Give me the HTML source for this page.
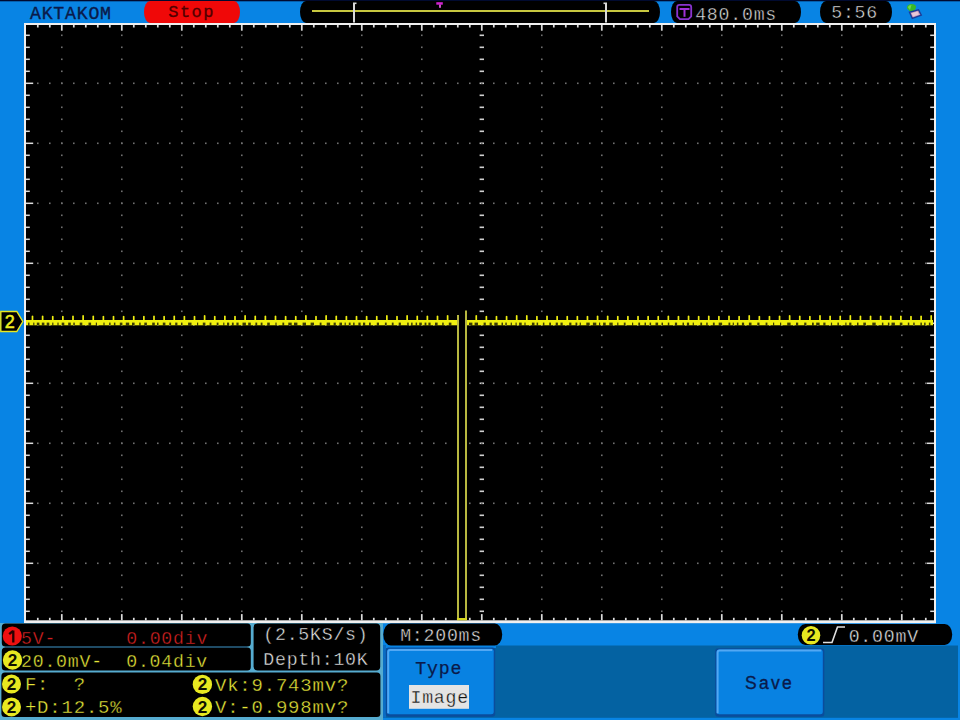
<!DOCTYPE html>
<html><head><meta charset="utf-8"><style>
html,body{margin:0;padding:0;background:#0884e4;}
body{width:960px;height:720px;overflow:hidden;}
svg{display:block;}
</style></head><body>
<svg width="960" height="720" viewBox="0 0 960 720">
<rect x="0" y="0" width="960" height="720" fill="#0884e4" />
<rect x="0" y="0" width="960" height="1.3" fill="#000a30" />
<text x="29.98" y="19.3" fill="#0a1a4a" font-family='"Liberation Mono", monospace' font-size="18.22" letter-spacing="0.768" font-weight="normal" style="white-space:pre" stroke="#0a1a4a" stroke-width="0.35" >AKTAKOM</text>
<rect x="144" y="1" width="96" height="21.9" rx="6" ry="10.9" fill="#f00808"/>
<text x="168.22" y="17.3" fill="#500000" font-family='"Liberation Mono", monospace' font-size="17.00" letter-spacing="1.496" font-weight="normal" style="white-space:pre" stroke="#500000" stroke-width="0.3" >Stop</text>
<rect x="300" y="1" width="360" height="21.9" rx="6" ry="10.9" fill="#000"/>
<rect x="312" y="10" width="337" height="2" fill="#c8c840" />
<rect x="353" y="3" width="2" height="19.5" fill="#d8d8d8" />
<rect x="353" y="2.5" width="3.5" height="1.6" fill="#d8d8d8" />
<rect x="605" y="3" width="2" height="19.5" fill="#d8d8d8" />
<rect x="603.5" y="2.5" width="3.5" height="1.6" fill="#d8d8d8" />
<rect x="436.3" y="2.2" width="6.5" height="2.5" fill="#d020d0" />
<rect x="439" y="4.5" width="2" height="3.3" fill="#c850c8" />
<rect x="671" y="1" width="130" height="21.9" rx="6" ry="10.9" fill="#000"/>
<path d="M677.2 7 Q677.2 4.8 679.4 4.8 L689 4.8 Q691.2 4.8 691.2 7 L691.2 16.5 L688.5 19.2 L679.9 19.2 L677.2 16.5 Z" fill="none" stroke="#8a34d0" stroke-width="1.8"/>
<rect x="679.5" y="8" width="10" height="2" fill="#a030d8" />
<rect x="683.5" y="9" width="2" height="7.8" fill="#a030d8" />
<text x="695.18" y="19.5" fill="#e4e4e4" font-family='"Liberation Mono", monospace' font-size="18.22" letter-spacing="0.768" font-weight="normal" style="white-space:pre" stroke="#000" stroke-width="0.45" >480.0ms</text>
<rect x="820" y="1" width="72" height="21.9" rx="6" ry="10.9" fill="#000"/>
<text x="831.23" y="18.1" fill="#e4e4e4" font-family='"Liberation Mono", monospace' font-size="18.22" letter-spacing="0.768" font-weight="normal" style="white-space:pre" stroke="#000" stroke-width="0.45" >5:56</text>
<path d="M907 8.5 Q906.5 4.5 911 4 Q916.5 3.8 916 7.5 L914.5 10.8 L910.5 12 Z" fill="#38b828"/>
<path d="M907.8 7 Q909 5 911.5 5 L910 10 Z" fill="#70d850"/>
<path d="M909.5 12.2 L918.5 9.8 L921.3 15.2 L912.3 18.3 Z" fill="#c898b8" stroke="#1a3c98" stroke-width="1.4"/>
<path d="M911.5 13.2 L917.5 11.5 L919 14.5 L913 16.5 Z" fill="#e8c8d8"/>
<rect x="24" y="23" width="912" height="600.2" fill="#f0f0f0" />
<rect x="26" y="25" width="908" height="595.3" fill="#000" />
<rect x="61.0" y="34.5" width="1.6" height="1.6" fill="#707070" />
<rect x="61.0" y="46.5" width="1.6" height="1.6" fill="#707070" />
<rect x="61.0" y="58.5" width="1.6" height="1.6" fill="#707070" />
<rect x="61.0" y="70.5" width="1.6" height="1.6" fill="#707070" />
<rect x="61.0" y="82.5" width="1.6" height="1.6" fill="#707070" />
<rect x="61.0" y="94.5" width="1.6" height="1.6" fill="#707070" />
<rect x="61.0" y="106.5" width="1.6" height="1.6" fill="#707070" />
<rect x="61.0" y="118.5" width="1.6" height="1.6" fill="#707070" />
<rect x="61.0" y="130.5" width="1.6" height="1.6" fill="#707070" />
<rect x="61.0" y="142.5" width="1.6" height="1.6" fill="#707070" />
<rect x="61.0" y="154.5" width="1.6" height="1.6" fill="#707070" />
<rect x="61.0" y="166.5" width="1.6" height="1.6" fill="#707070" />
<rect x="61.0" y="178.5" width="1.6" height="1.6" fill="#707070" />
<rect x="61.0" y="190.5" width="1.6" height="1.6" fill="#707070" />
<rect x="61.0" y="202.5" width="1.6" height="1.6" fill="#707070" />
<rect x="61.0" y="214.5" width="1.6" height="1.6" fill="#707070" />
<rect x="61.0" y="226.5" width="1.6" height="1.6" fill="#707070" />
<rect x="61.0" y="238.5" width="1.6" height="1.6" fill="#707070" />
<rect x="61.0" y="250.5" width="1.6" height="1.6" fill="#707070" />
<rect x="61.0" y="262.5" width="1.6" height="1.6" fill="#707070" />
<rect x="61.0" y="274.5" width="1.6" height="1.6" fill="#707070" />
<rect x="61.0" y="286.5" width="1.6" height="1.6" fill="#707070" />
<rect x="61.0" y="298.5" width="1.6" height="1.6" fill="#707070" />
<rect x="61.0" y="310.5" width="1.6" height="1.6" fill="#707070" />
<rect x="61.0" y="322.5" width="1.6" height="1.6" fill="#707070" />
<rect x="61.0" y="334.5" width="1.6" height="1.6" fill="#707070" />
<rect x="61.0" y="346.5" width="1.6" height="1.6" fill="#707070" />
<rect x="61.0" y="358.5" width="1.6" height="1.6" fill="#707070" />
<rect x="61.0" y="370.5" width="1.6" height="1.6" fill="#707070" />
<rect x="61.0" y="382.5" width="1.6" height="1.6" fill="#707070" />
<rect x="61.0" y="394.5" width="1.6" height="1.6" fill="#707070" />
<rect x="61.0" y="406.5" width="1.6" height="1.6" fill="#707070" />
<rect x="61.0" y="418.5" width="1.6" height="1.6" fill="#707070" />
<rect x="61.0" y="430.5" width="1.6" height="1.6" fill="#707070" />
<rect x="61.0" y="442.5" width="1.6" height="1.6" fill="#707070" />
<rect x="61.0" y="454.5" width="1.6" height="1.6" fill="#707070" />
<rect x="61.0" y="466.5" width="1.6" height="1.6" fill="#707070" />
<rect x="61.0" y="478.5" width="1.6" height="1.6" fill="#707070" />
<rect x="61.0" y="490.5" width="1.6" height="1.6" fill="#707070" />
<rect x="61.0" y="502.5" width="1.6" height="1.6" fill="#707070" />
<rect x="61.0" y="514.5" width="1.6" height="1.6" fill="#707070" />
<rect x="61.0" y="526.5" width="1.6" height="1.6" fill="#707070" />
<rect x="61.0" y="538.5" width="1.6" height="1.6" fill="#707070" />
<rect x="61.0" y="550.5" width="1.6" height="1.6" fill="#707070" />
<rect x="61.0" y="562.5" width="1.6" height="1.6" fill="#707070" />
<rect x="61.0" y="574.5" width="1.6" height="1.6" fill="#707070" />
<rect x="61.0" y="586.5" width="1.6" height="1.6" fill="#707070" />
<rect x="61.0" y="598.5" width="1.6" height="1.6" fill="#707070" />
<rect x="61.0" y="610.5" width="1.6" height="1.6" fill="#707070" />
<rect x="121.0" y="34.5" width="1.6" height="1.6" fill="#707070" />
<rect x="121.0" y="46.5" width="1.6" height="1.6" fill="#707070" />
<rect x="121.0" y="58.5" width="1.6" height="1.6" fill="#707070" />
<rect x="121.0" y="70.5" width="1.6" height="1.6" fill="#707070" />
<rect x="121.0" y="82.5" width="1.6" height="1.6" fill="#707070" />
<rect x="121.0" y="94.5" width="1.6" height="1.6" fill="#707070" />
<rect x="121.0" y="106.5" width="1.6" height="1.6" fill="#707070" />
<rect x="121.0" y="118.5" width="1.6" height="1.6" fill="#707070" />
<rect x="121.0" y="130.5" width="1.6" height="1.6" fill="#707070" />
<rect x="121.0" y="142.5" width="1.6" height="1.6" fill="#707070" />
<rect x="121.0" y="154.5" width="1.6" height="1.6" fill="#707070" />
<rect x="121.0" y="166.5" width="1.6" height="1.6" fill="#707070" />
<rect x="121.0" y="178.5" width="1.6" height="1.6" fill="#707070" />
<rect x="121.0" y="190.5" width="1.6" height="1.6" fill="#707070" />
<rect x="121.0" y="202.5" width="1.6" height="1.6" fill="#707070" />
<rect x="121.0" y="214.5" width="1.6" height="1.6" fill="#707070" />
<rect x="121.0" y="226.5" width="1.6" height="1.6" fill="#707070" />
<rect x="121.0" y="238.5" width="1.6" height="1.6" fill="#707070" />
<rect x="121.0" y="250.5" width="1.6" height="1.6" fill="#707070" />
<rect x="121.0" y="262.5" width="1.6" height="1.6" fill="#707070" />
<rect x="121.0" y="274.5" width="1.6" height="1.6" fill="#707070" />
<rect x="121.0" y="286.5" width="1.6" height="1.6" fill="#707070" />
<rect x="121.0" y="298.5" width="1.6" height="1.6" fill="#707070" />
<rect x="121.0" y="310.5" width="1.6" height="1.6" fill="#707070" />
<rect x="121.0" y="322.5" width="1.6" height="1.6" fill="#707070" />
<rect x="121.0" y="334.5" width="1.6" height="1.6" fill="#707070" />
<rect x="121.0" y="346.5" width="1.6" height="1.6" fill="#707070" />
<rect x="121.0" y="358.5" width="1.6" height="1.6" fill="#707070" />
<rect x="121.0" y="370.5" width="1.6" height="1.6" fill="#707070" />
<rect x="121.0" y="382.5" width="1.6" height="1.6" fill="#707070" />
<rect x="121.0" y="394.5" width="1.6" height="1.6" fill="#707070" />
<rect x="121.0" y="406.5" width="1.6" height="1.6" fill="#707070" />
<rect x="121.0" y="418.5" width="1.6" height="1.6" fill="#707070" />
<rect x="121.0" y="430.5" width="1.6" height="1.6" fill="#707070" />
<rect x="121.0" y="442.5" width="1.6" height="1.6" fill="#707070" />
<rect x="121.0" y="454.5" width="1.6" height="1.6" fill="#707070" />
<rect x="121.0" y="466.5" width="1.6" height="1.6" fill="#707070" />
<rect x="121.0" y="478.5" width="1.6" height="1.6" fill="#707070" />
<rect x="121.0" y="490.5" width="1.6" height="1.6" fill="#707070" />
<rect x="121.0" y="502.5" width="1.6" height="1.6" fill="#707070" />
<rect x="121.0" y="514.5" width="1.6" height="1.6" fill="#707070" />
<rect x="121.0" y="526.5" width="1.6" height="1.6" fill="#707070" />
<rect x="121.0" y="538.5" width="1.6" height="1.6" fill="#707070" />
<rect x="121.0" y="550.5" width="1.6" height="1.6" fill="#707070" />
<rect x="121.0" y="562.5" width="1.6" height="1.6" fill="#707070" />
<rect x="121.0" y="574.5" width="1.6" height="1.6" fill="#707070" />
<rect x="121.0" y="586.5" width="1.6" height="1.6" fill="#707070" />
<rect x="121.0" y="598.5" width="1.6" height="1.6" fill="#707070" />
<rect x="121.0" y="610.5" width="1.6" height="1.6" fill="#707070" />
<rect x="181.0" y="34.5" width="1.6" height="1.6" fill="#707070" />
<rect x="181.0" y="46.5" width="1.6" height="1.6" fill="#707070" />
<rect x="181.0" y="58.5" width="1.6" height="1.6" fill="#707070" />
<rect x="181.0" y="70.5" width="1.6" height="1.6" fill="#707070" />
<rect x="181.0" y="82.5" width="1.6" height="1.6" fill="#707070" />
<rect x="181.0" y="94.5" width="1.6" height="1.6" fill="#707070" />
<rect x="181.0" y="106.5" width="1.6" height="1.6" fill="#707070" />
<rect x="181.0" y="118.5" width="1.6" height="1.6" fill="#707070" />
<rect x="181.0" y="130.5" width="1.6" height="1.6" fill="#707070" />
<rect x="181.0" y="142.5" width="1.6" height="1.6" fill="#707070" />
<rect x="181.0" y="154.5" width="1.6" height="1.6" fill="#707070" />
<rect x="181.0" y="166.5" width="1.6" height="1.6" fill="#707070" />
<rect x="181.0" y="178.5" width="1.6" height="1.6" fill="#707070" />
<rect x="181.0" y="190.5" width="1.6" height="1.6" fill="#707070" />
<rect x="181.0" y="202.5" width="1.6" height="1.6" fill="#707070" />
<rect x="181.0" y="214.5" width="1.6" height="1.6" fill="#707070" />
<rect x="181.0" y="226.5" width="1.6" height="1.6" fill="#707070" />
<rect x="181.0" y="238.5" width="1.6" height="1.6" fill="#707070" />
<rect x="181.0" y="250.5" width="1.6" height="1.6" fill="#707070" />
<rect x="181.0" y="262.5" width="1.6" height="1.6" fill="#707070" />
<rect x="181.0" y="274.5" width="1.6" height="1.6" fill="#707070" />
<rect x="181.0" y="286.5" width="1.6" height="1.6" fill="#707070" />
<rect x="181.0" y="298.5" width="1.6" height="1.6" fill="#707070" />
<rect x="181.0" y="310.5" width="1.6" height="1.6" fill="#707070" />
<rect x="181.0" y="322.5" width="1.6" height="1.6" fill="#707070" />
<rect x="181.0" y="334.5" width="1.6" height="1.6" fill="#707070" />
<rect x="181.0" y="346.5" width="1.6" height="1.6" fill="#707070" />
<rect x="181.0" y="358.5" width="1.6" height="1.6" fill="#707070" />
<rect x="181.0" y="370.5" width="1.6" height="1.6" fill="#707070" />
<rect x="181.0" y="382.5" width="1.6" height="1.6" fill="#707070" />
<rect x="181.0" y="394.5" width="1.6" height="1.6" fill="#707070" />
<rect x="181.0" y="406.5" width="1.6" height="1.6" fill="#707070" />
<rect x="181.0" y="418.5" width="1.6" height="1.6" fill="#707070" />
<rect x="181.0" y="430.5" width="1.6" height="1.6" fill="#707070" />
<rect x="181.0" y="442.5" width="1.6" height="1.6" fill="#707070" />
<rect x="181.0" y="454.5" width="1.6" height="1.6" fill="#707070" />
<rect x="181.0" y="466.5" width="1.6" height="1.6" fill="#707070" />
<rect x="181.0" y="478.5" width="1.6" height="1.6" fill="#707070" />
<rect x="181.0" y="490.5" width="1.6" height="1.6" fill="#707070" />
<rect x="181.0" y="502.5" width="1.6" height="1.6" fill="#707070" />
<rect x="181.0" y="514.5" width="1.6" height="1.6" fill="#707070" />
<rect x="181.0" y="526.5" width="1.6" height="1.6" fill="#707070" />
<rect x="181.0" y="538.5" width="1.6" height="1.6" fill="#707070" />
<rect x="181.0" y="550.5" width="1.6" height="1.6" fill="#707070" />
<rect x="181.0" y="562.5" width="1.6" height="1.6" fill="#707070" />
<rect x="181.0" y="574.5" width="1.6" height="1.6" fill="#707070" />
<rect x="181.0" y="586.5" width="1.6" height="1.6" fill="#707070" />
<rect x="181.0" y="598.5" width="1.6" height="1.6" fill="#707070" />
<rect x="181.0" y="610.5" width="1.6" height="1.6" fill="#707070" />
<rect x="241.0" y="34.5" width="1.6" height="1.6" fill="#707070" />
<rect x="241.0" y="46.5" width="1.6" height="1.6" fill="#707070" />
<rect x="241.0" y="58.5" width="1.6" height="1.6" fill="#707070" />
<rect x="241.0" y="70.5" width="1.6" height="1.6" fill="#707070" />
<rect x="241.0" y="82.5" width="1.6" height="1.6" fill="#707070" />
<rect x="241.0" y="94.5" width="1.6" height="1.6" fill="#707070" />
<rect x="241.0" y="106.5" width="1.6" height="1.6" fill="#707070" />
<rect x="241.0" y="118.5" width="1.6" height="1.6" fill="#707070" />
<rect x="241.0" y="130.5" width="1.6" height="1.6" fill="#707070" />
<rect x="241.0" y="142.5" width="1.6" height="1.6" fill="#707070" />
<rect x="241.0" y="154.5" width="1.6" height="1.6" fill="#707070" />
<rect x="241.0" y="166.5" width="1.6" height="1.6" fill="#707070" />
<rect x="241.0" y="178.5" width="1.6" height="1.6" fill="#707070" />
<rect x="241.0" y="190.5" width="1.6" height="1.6" fill="#707070" />
<rect x="241.0" y="202.5" width="1.6" height="1.6" fill="#707070" />
<rect x="241.0" y="214.5" width="1.6" height="1.6" fill="#707070" />
<rect x="241.0" y="226.5" width="1.6" height="1.6" fill="#707070" />
<rect x="241.0" y="238.5" width="1.6" height="1.6" fill="#707070" />
<rect x="241.0" y="250.5" width="1.6" height="1.6" fill="#707070" />
<rect x="241.0" y="262.5" width="1.6" height="1.6" fill="#707070" />
<rect x="241.0" y="274.5" width="1.6" height="1.6" fill="#707070" />
<rect x="241.0" y="286.5" width="1.6" height="1.6" fill="#707070" />
<rect x="241.0" y="298.5" width="1.6" height="1.6" fill="#707070" />
<rect x="241.0" y="310.5" width="1.6" height="1.6" fill="#707070" />
<rect x="241.0" y="322.5" width="1.6" height="1.6" fill="#707070" />
<rect x="241.0" y="334.5" width="1.6" height="1.6" fill="#707070" />
<rect x="241.0" y="346.5" width="1.6" height="1.6" fill="#707070" />
<rect x="241.0" y="358.5" width="1.6" height="1.6" fill="#707070" />
<rect x="241.0" y="370.5" width="1.6" height="1.6" fill="#707070" />
<rect x="241.0" y="382.5" width="1.6" height="1.6" fill="#707070" />
<rect x="241.0" y="394.5" width="1.6" height="1.6" fill="#707070" />
<rect x="241.0" y="406.5" width="1.6" height="1.6" fill="#707070" />
<rect x="241.0" y="418.5" width="1.6" height="1.6" fill="#707070" />
<rect x="241.0" y="430.5" width="1.6" height="1.6" fill="#707070" />
<rect x="241.0" y="442.5" width="1.6" height="1.6" fill="#707070" />
<rect x="241.0" y="454.5" width="1.6" height="1.6" fill="#707070" />
<rect x="241.0" y="466.5" width="1.6" height="1.6" fill="#707070" />
<rect x="241.0" y="478.5" width="1.6" height="1.6" fill="#707070" />
<rect x="241.0" y="490.5" width="1.6" height="1.6" fill="#707070" />
<rect x="241.0" y="502.5" width="1.6" height="1.6" fill="#707070" />
<rect x="241.0" y="514.5" width="1.6" height="1.6" fill="#707070" />
<rect x="241.0" y="526.5" width="1.6" height="1.6" fill="#707070" />
<rect x="241.0" y="538.5" width="1.6" height="1.6" fill="#707070" />
<rect x="241.0" y="550.5" width="1.6" height="1.6" fill="#707070" />
<rect x="241.0" y="562.5" width="1.6" height="1.6" fill="#707070" />
<rect x="241.0" y="574.5" width="1.6" height="1.6" fill="#707070" />
<rect x="241.0" y="586.5" width="1.6" height="1.6" fill="#707070" />
<rect x="241.0" y="598.5" width="1.6" height="1.6" fill="#707070" />
<rect x="241.0" y="610.5" width="1.6" height="1.6" fill="#707070" />
<rect x="301.0" y="34.5" width="1.6" height="1.6" fill="#707070" />
<rect x="301.0" y="46.5" width="1.6" height="1.6" fill="#707070" />
<rect x="301.0" y="58.5" width="1.6" height="1.6" fill="#707070" />
<rect x="301.0" y="70.5" width="1.6" height="1.6" fill="#707070" />
<rect x="301.0" y="82.5" width="1.6" height="1.6" fill="#707070" />
<rect x="301.0" y="94.5" width="1.6" height="1.6" fill="#707070" />
<rect x="301.0" y="106.5" width="1.6" height="1.6" fill="#707070" />
<rect x="301.0" y="118.5" width="1.6" height="1.6" fill="#707070" />
<rect x="301.0" y="130.5" width="1.6" height="1.6" fill="#707070" />
<rect x="301.0" y="142.5" width="1.6" height="1.6" fill="#707070" />
<rect x="301.0" y="154.5" width="1.6" height="1.6" fill="#707070" />
<rect x="301.0" y="166.5" width="1.6" height="1.6" fill="#707070" />
<rect x="301.0" y="178.5" width="1.6" height="1.6" fill="#707070" />
<rect x="301.0" y="190.5" width="1.6" height="1.6" fill="#707070" />
<rect x="301.0" y="202.5" width="1.6" height="1.6" fill="#707070" />
<rect x="301.0" y="214.5" width="1.6" height="1.6" fill="#707070" />
<rect x="301.0" y="226.5" width="1.6" height="1.6" fill="#707070" />
<rect x="301.0" y="238.5" width="1.6" height="1.6" fill="#707070" />
<rect x="301.0" y="250.5" width="1.6" height="1.6" fill="#707070" />
<rect x="301.0" y="262.5" width="1.6" height="1.6" fill="#707070" />
<rect x="301.0" y="274.5" width="1.6" height="1.6" fill="#707070" />
<rect x="301.0" y="286.5" width="1.6" height="1.6" fill="#707070" />
<rect x="301.0" y="298.5" width="1.6" height="1.6" fill="#707070" />
<rect x="301.0" y="310.5" width="1.6" height="1.6" fill="#707070" />
<rect x="301.0" y="322.5" width="1.6" height="1.6" fill="#707070" />
<rect x="301.0" y="334.5" width="1.6" height="1.6" fill="#707070" />
<rect x="301.0" y="346.5" width="1.6" height="1.6" fill="#707070" />
<rect x="301.0" y="358.5" width="1.6" height="1.6" fill="#707070" />
<rect x="301.0" y="370.5" width="1.6" height="1.6" fill="#707070" />
<rect x="301.0" y="382.5" width="1.6" height="1.6" fill="#707070" />
<rect x="301.0" y="394.5" width="1.6" height="1.6" fill="#707070" />
<rect x="301.0" y="406.5" width="1.6" height="1.6" fill="#707070" />
<rect x="301.0" y="418.5" width="1.6" height="1.6" fill="#707070" />
<rect x="301.0" y="430.5" width="1.6" height="1.6" fill="#707070" />
<rect x="301.0" y="442.5" width="1.6" height="1.6" fill="#707070" />
<rect x="301.0" y="454.5" width="1.6" height="1.6" fill="#707070" />
<rect x="301.0" y="466.5" width="1.6" height="1.6" fill="#707070" />
<rect x="301.0" y="478.5" width="1.6" height="1.6" fill="#707070" />
<rect x="301.0" y="490.5" width="1.6" height="1.6" fill="#707070" />
<rect x="301.0" y="502.5" width="1.6" height="1.6" fill="#707070" />
<rect x="301.0" y="514.5" width="1.6" height="1.6" fill="#707070" />
<rect x="301.0" y="526.5" width="1.6" height="1.6" fill="#707070" />
<rect x="301.0" y="538.5" width="1.6" height="1.6" fill="#707070" />
<rect x="301.0" y="550.5" width="1.6" height="1.6" fill="#707070" />
<rect x="301.0" y="562.5" width="1.6" height="1.6" fill="#707070" />
<rect x="301.0" y="574.5" width="1.6" height="1.6" fill="#707070" />
<rect x="301.0" y="586.5" width="1.6" height="1.6" fill="#707070" />
<rect x="301.0" y="598.5" width="1.6" height="1.6" fill="#707070" />
<rect x="301.0" y="610.5" width="1.6" height="1.6" fill="#707070" />
<rect x="361.0" y="34.5" width="1.6" height="1.6" fill="#707070" />
<rect x="361.0" y="46.5" width="1.6" height="1.6" fill="#707070" />
<rect x="361.0" y="58.5" width="1.6" height="1.6" fill="#707070" />
<rect x="361.0" y="70.5" width="1.6" height="1.6" fill="#707070" />
<rect x="361.0" y="82.5" width="1.6" height="1.6" fill="#707070" />
<rect x="361.0" y="94.5" width="1.6" height="1.6" fill="#707070" />
<rect x="361.0" y="106.5" width="1.6" height="1.6" fill="#707070" />
<rect x="361.0" y="118.5" width="1.6" height="1.6" fill="#707070" />
<rect x="361.0" y="130.5" width="1.6" height="1.6" fill="#707070" />
<rect x="361.0" y="142.5" width="1.6" height="1.6" fill="#707070" />
<rect x="361.0" y="154.5" width="1.6" height="1.6" fill="#707070" />
<rect x="361.0" y="166.5" width="1.6" height="1.6" fill="#707070" />
<rect x="361.0" y="178.5" width="1.6" height="1.6" fill="#707070" />
<rect x="361.0" y="190.5" width="1.6" height="1.6" fill="#707070" />
<rect x="361.0" y="202.5" width="1.6" height="1.6" fill="#707070" />
<rect x="361.0" y="214.5" width="1.6" height="1.6" fill="#707070" />
<rect x="361.0" y="226.5" width="1.6" height="1.6" fill="#707070" />
<rect x="361.0" y="238.5" width="1.6" height="1.6" fill="#707070" />
<rect x="361.0" y="250.5" width="1.6" height="1.6" fill="#707070" />
<rect x="361.0" y="262.5" width="1.6" height="1.6" fill="#707070" />
<rect x="361.0" y="274.5" width="1.6" height="1.6" fill="#707070" />
<rect x="361.0" y="286.5" width="1.6" height="1.6" fill="#707070" />
<rect x="361.0" y="298.5" width="1.6" height="1.6" fill="#707070" />
<rect x="361.0" y="310.5" width="1.6" height="1.6" fill="#707070" />
<rect x="361.0" y="322.5" width="1.6" height="1.6" fill="#707070" />
<rect x="361.0" y="334.5" width="1.6" height="1.6" fill="#707070" />
<rect x="361.0" y="346.5" width="1.6" height="1.6" fill="#707070" />
<rect x="361.0" y="358.5" width="1.6" height="1.6" fill="#707070" />
<rect x="361.0" y="370.5" width="1.6" height="1.6" fill="#707070" />
<rect x="361.0" y="382.5" width="1.6" height="1.6" fill="#707070" />
<rect x="361.0" y="394.5" width="1.6" height="1.6" fill="#707070" />
<rect x="361.0" y="406.5" width="1.6" height="1.6" fill="#707070" />
<rect x="361.0" y="418.5" width="1.6" height="1.6" fill="#707070" />
<rect x="361.0" y="430.5" width="1.6" height="1.6" fill="#707070" />
<rect x="361.0" y="442.5" width="1.6" height="1.6" fill="#707070" />
<rect x="361.0" y="454.5" width="1.6" height="1.6" fill="#707070" />
<rect x="361.0" y="466.5" width="1.6" height="1.6" fill="#707070" />
<rect x="361.0" y="478.5" width="1.6" height="1.6" fill="#707070" />
<rect x="361.0" y="490.5" width="1.6" height="1.6" fill="#707070" />
<rect x="361.0" y="502.5" width="1.6" height="1.6" fill="#707070" />
<rect x="361.0" y="514.5" width="1.6" height="1.6" fill="#707070" />
<rect x="361.0" y="526.5" width="1.6" height="1.6" fill="#707070" />
<rect x="361.0" y="538.5" width="1.6" height="1.6" fill="#707070" />
<rect x="361.0" y="550.5" width="1.6" height="1.6" fill="#707070" />
<rect x="361.0" y="562.5" width="1.6" height="1.6" fill="#707070" />
<rect x="361.0" y="574.5" width="1.6" height="1.6" fill="#707070" />
<rect x="361.0" y="586.5" width="1.6" height="1.6" fill="#707070" />
<rect x="361.0" y="598.5" width="1.6" height="1.6" fill="#707070" />
<rect x="361.0" y="610.5" width="1.6" height="1.6" fill="#707070" />
<rect x="421.0" y="34.5" width="1.6" height="1.6" fill="#707070" />
<rect x="421.0" y="46.5" width="1.6" height="1.6" fill="#707070" />
<rect x="421.0" y="58.5" width="1.6" height="1.6" fill="#707070" />
<rect x="421.0" y="70.5" width="1.6" height="1.6" fill="#707070" />
<rect x="421.0" y="82.5" width="1.6" height="1.6" fill="#707070" />
<rect x="421.0" y="94.5" width="1.6" height="1.6" fill="#707070" />
<rect x="421.0" y="106.5" width="1.6" height="1.6" fill="#707070" />
<rect x="421.0" y="118.5" width="1.6" height="1.6" fill="#707070" />
<rect x="421.0" y="130.5" width="1.6" height="1.6" fill="#707070" />
<rect x="421.0" y="142.5" width="1.6" height="1.6" fill="#707070" />
<rect x="421.0" y="154.5" width="1.6" height="1.6" fill="#707070" />
<rect x="421.0" y="166.5" width="1.6" height="1.6" fill="#707070" />
<rect x="421.0" y="178.5" width="1.6" height="1.6" fill="#707070" />
<rect x="421.0" y="190.5" width="1.6" height="1.6" fill="#707070" />
<rect x="421.0" y="202.5" width="1.6" height="1.6" fill="#707070" />
<rect x="421.0" y="214.5" width="1.6" height="1.6" fill="#707070" />
<rect x="421.0" y="226.5" width="1.6" height="1.6" fill="#707070" />
<rect x="421.0" y="238.5" width="1.6" height="1.6" fill="#707070" />
<rect x="421.0" y="250.5" width="1.6" height="1.6" fill="#707070" />
<rect x="421.0" y="262.5" width="1.6" height="1.6" fill="#707070" />
<rect x="421.0" y="274.5" width="1.6" height="1.6" fill="#707070" />
<rect x="421.0" y="286.5" width="1.6" height="1.6" fill="#707070" />
<rect x="421.0" y="298.5" width="1.6" height="1.6" fill="#707070" />
<rect x="421.0" y="310.5" width="1.6" height="1.6" fill="#707070" />
<rect x="421.0" y="322.5" width="1.6" height="1.6" fill="#707070" />
<rect x="421.0" y="334.5" width="1.6" height="1.6" fill="#707070" />
<rect x="421.0" y="346.5" width="1.6" height="1.6" fill="#707070" />
<rect x="421.0" y="358.5" width="1.6" height="1.6" fill="#707070" />
<rect x="421.0" y="370.5" width="1.6" height="1.6" fill="#707070" />
<rect x="421.0" y="382.5" width="1.6" height="1.6" fill="#707070" />
<rect x="421.0" y="394.5" width="1.6" height="1.6" fill="#707070" />
<rect x="421.0" y="406.5" width="1.6" height="1.6" fill="#707070" />
<rect x="421.0" y="418.5" width="1.6" height="1.6" fill="#707070" />
<rect x="421.0" y="430.5" width="1.6" height="1.6" fill="#707070" />
<rect x="421.0" y="442.5" width="1.6" height="1.6" fill="#707070" />
<rect x="421.0" y="454.5" width="1.6" height="1.6" fill="#707070" />
<rect x="421.0" y="466.5" width="1.6" height="1.6" fill="#707070" />
<rect x="421.0" y="478.5" width="1.6" height="1.6" fill="#707070" />
<rect x="421.0" y="490.5" width="1.6" height="1.6" fill="#707070" />
<rect x="421.0" y="502.5" width="1.6" height="1.6" fill="#707070" />
<rect x="421.0" y="514.5" width="1.6" height="1.6" fill="#707070" />
<rect x="421.0" y="526.5" width="1.6" height="1.6" fill="#707070" />
<rect x="421.0" y="538.5" width="1.6" height="1.6" fill="#707070" />
<rect x="421.0" y="550.5" width="1.6" height="1.6" fill="#707070" />
<rect x="421.0" y="562.5" width="1.6" height="1.6" fill="#707070" />
<rect x="421.0" y="574.5" width="1.6" height="1.6" fill="#707070" />
<rect x="421.0" y="586.5" width="1.6" height="1.6" fill="#707070" />
<rect x="421.0" y="598.5" width="1.6" height="1.6" fill="#707070" />
<rect x="421.0" y="610.5" width="1.6" height="1.6" fill="#707070" />
<rect x="479.6" y="34.5" width="4.4" height="1.6" fill="#d0d0d0" />
<rect x="479.6" y="46.5" width="4.4" height="1.6" fill="#d0d0d0" />
<rect x="479.6" y="58.5" width="4.4" height="1.6" fill="#d0d0d0" />
<rect x="479.6" y="70.5" width="4.4" height="1.6" fill="#d0d0d0" />
<rect x="479.6" y="82.5" width="4.4" height="1.6" fill="#d0d0d0" />
<rect x="479.6" y="94.5" width="4.4" height="1.6" fill="#d0d0d0" />
<rect x="479.6" y="106.5" width="4.4" height="1.6" fill="#d0d0d0" />
<rect x="479.6" y="118.5" width="4.4" height="1.6" fill="#d0d0d0" />
<rect x="479.6" y="130.5" width="4.4" height="1.6" fill="#d0d0d0" />
<rect x="479.6" y="142.5" width="4.4" height="1.6" fill="#d0d0d0" />
<rect x="479.6" y="154.5" width="4.4" height="1.6" fill="#d0d0d0" />
<rect x="479.6" y="166.5" width="4.4" height="1.6" fill="#d0d0d0" />
<rect x="479.6" y="178.5" width="4.4" height="1.6" fill="#d0d0d0" />
<rect x="479.6" y="190.5" width="4.4" height="1.6" fill="#d0d0d0" />
<rect x="479.6" y="202.5" width="4.4" height="1.6" fill="#d0d0d0" />
<rect x="479.6" y="214.5" width="4.4" height="1.6" fill="#d0d0d0" />
<rect x="479.6" y="226.5" width="4.4" height="1.6" fill="#d0d0d0" />
<rect x="479.6" y="238.5" width="4.4" height="1.6" fill="#d0d0d0" />
<rect x="479.6" y="250.5" width="4.4" height="1.6" fill="#d0d0d0" />
<rect x="479.6" y="262.5" width="4.4" height="1.6" fill="#d0d0d0" />
<rect x="479.6" y="274.5" width="4.4" height="1.6" fill="#d0d0d0" />
<rect x="479.6" y="286.5" width="4.4" height="1.6" fill="#d0d0d0" />
<rect x="479.6" y="298.5" width="4.4" height="1.6" fill="#d0d0d0" />
<rect x="479.6" y="310.5" width="4.4" height="1.6" fill="#d0d0d0" />
<rect x="479.6" y="322.5" width="4.4" height="1.6" fill="#d0d0d0" />
<rect x="479.6" y="334.5" width="4.4" height="1.6" fill="#d0d0d0" />
<rect x="479.6" y="346.5" width="4.4" height="1.6" fill="#d0d0d0" />
<rect x="479.6" y="358.5" width="4.4" height="1.6" fill="#d0d0d0" />
<rect x="479.6" y="370.5" width="4.4" height="1.6" fill="#d0d0d0" />
<rect x="479.6" y="382.5" width="4.4" height="1.6" fill="#d0d0d0" />
<rect x="479.6" y="394.5" width="4.4" height="1.6" fill="#d0d0d0" />
<rect x="479.6" y="406.5" width="4.4" height="1.6" fill="#d0d0d0" />
<rect x="479.6" y="418.5" width="4.4" height="1.6" fill="#d0d0d0" />
<rect x="479.6" y="430.5" width="4.4" height="1.6" fill="#d0d0d0" />
<rect x="479.6" y="442.5" width="4.4" height="1.6" fill="#d0d0d0" />
<rect x="479.6" y="454.5" width="4.4" height="1.6" fill="#d0d0d0" />
<rect x="479.6" y="466.5" width="4.4" height="1.6" fill="#d0d0d0" />
<rect x="479.6" y="478.5" width="4.4" height="1.6" fill="#d0d0d0" />
<rect x="479.6" y="490.5" width="4.4" height="1.6" fill="#d0d0d0" />
<rect x="479.6" y="502.5" width="4.4" height="1.6" fill="#d0d0d0" />
<rect x="479.6" y="514.5" width="4.4" height="1.6" fill="#d0d0d0" />
<rect x="479.6" y="526.5" width="4.4" height="1.6" fill="#d0d0d0" />
<rect x="479.6" y="538.5" width="4.4" height="1.6" fill="#d0d0d0" />
<rect x="479.6" y="550.5" width="4.4" height="1.6" fill="#d0d0d0" />
<rect x="479.6" y="562.5" width="4.4" height="1.6" fill="#d0d0d0" />
<rect x="479.6" y="574.5" width="4.4" height="1.6" fill="#d0d0d0" />
<rect x="479.6" y="586.5" width="4.4" height="1.6" fill="#d0d0d0" />
<rect x="479.6" y="598.5" width="4.4" height="1.6" fill="#d0d0d0" />
<rect x="479.6" y="610.5" width="4.4" height="1.6" fill="#d0d0d0" />
<rect x="541.0" y="34.5" width="1.6" height="1.6" fill="#707070" />
<rect x="541.0" y="46.5" width="1.6" height="1.6" fill="#707070" />
<rect x="541.0" y="58.5" width="1.6" height="1.6" fill="#707070" />
<rect x="541.0" y="70.5" width="1.6" height="1.6" fill="#707070" />
<rect x="541.0" y="82.5" width="1.6" height="1.6" fill="#707070" />
<rect x="541.0" y="94.5" width="1.6" height="1.6" fill="#707070" />
<rect x="541.0" y="106.5" width="1.6" height="1.6" fill="#707070" />
<rect x="541.0" y="118.5" width="1.6" height="1.6" fill="#707070" />
<rect x="541.0" y="130.5" width="1.6" height="1.6" fill="#707070" />
<rect x="541.0" y="142.5" width="1.6" height="1.6" fill="#707070" />
<rect x="541.0" y="154.5" width="1.6" height="1.6" fill="#707070" />
<rect x="541.0" y="166.5" width="1.6" height="1.6" fill="#707070" />
<rect x="541.0" y="178.5" width="1.6" height="1.6" fill="#707070" />
<rect x="541.0" y="190.5" width="1.6" height="1.6" fill="#707070" />
<rect x="541.0" y="202.5" width="1.6" height="1.6" fill="#707070" />
<rect x="541.0" y="214.5" width="1.6" height="1.6" fill="#707070" />
<rect x="541.0" y="226.5" width="1.6" height="1.6" fill="#707070" />
<rect x="541.0" y="238.5" width="1.6" height="1.6" fill="#707070" />
<rect x="541.0" y="250.5" width="1.6" height="1.6" fill="#707070" />
<rect x="541.0" y="262.5" width="1.6" height="1.6" fill="#707070" />
<rect x="541.0" y="274.5" width="1.6" height="1.6" fill="#707070" />
<rect x="541.0" y="286.5" width="1.6" height="1.6" fill="#707070" />
<rect x="541.0" y="298.5" width="1.6" height="1.6" fill="#707070" />
<rect x="541.0" y="310.5" width="1.6" height="1.6" fill="#707070" />
<rect x="541.0" y="322.5" width="1.6" height="1.6" fill="#707070" />
<rect x="541.0" y="334.5" width="1.6" height="1.6" fill="#707070" />
<rect x="541.0" y="346.5" width="1.6" height="1.6" fill="#707070" />
<rect x="541.0" y="358.5" width="1.6" height="1.6" fill="#707070" />
<rect x="541.0" y="370.5" width="1.6" height="1.6" fill="#707070" />
<rect x="541.0" y="382.5" width="1.6" height="1.6" fill="#707070" />
<rect x="541.0" y="394.5" width="1.6" height="1.6" fill="#707070" />
<rect x="541.0" y="406.5" width="1.6" height="1.6" fill="#707070" />
<rect x="541.0" y="418.5" width="1.6" height="1.6" fill="#707070" />
<rect x="541.0" y="430.5" width="1.6" height="1.6" fill="#707070" />
<rect x="541.0" y="442.5" width="1.6" height="1.6" fill="#707070" />
<rect x="541.0" y="454.5" width="1.6" height="1.6" fill="#707070" />
<rect x="541.0" y="466.5" width="1.6" height="1.6" fill="#707070" />
<rect x="541.0" y="478.5" width="1.6" height="1.6" fill="#707070" />
<rect x="541.0" y="490.5" width="1.6" height="1.6" fill="#707070" />
<rect x="541.0" y="502.5" width="1.6" height="1.6" fill="#707070" />
<rect x="541.0" y="514.5" width="1.6" height="1.6" fill="#707070" />
<rect x="541.0" y="526.5" width="1.6" height="1.6" fill="#707070" />
<rect x="541.0" y="538.5" width="1.6" height="1.6" fill="#707070" />
<rect x="541.0" y="550.5" width="1.6" height="1.6" fill="#707070" />
<rect x="541.0" y="562.5" width="1.6" height="1.6" fill="#707070" />
<rect x="541.0" y="574.5" width="1.6" height="1.6" fill="#707070" />
<rect x="541.0" y="586.5" width="1.6" height="1.6" fill="#707070" />
<rect x="541.0" y="598.5" width="1.6" height="1.6" fill="#707070" />
<rect x="541.0" y="610.5" width="1.6" height="1.6" fill="#707070" />
<rect x="601.0" y="34.5" width="1.6" height="1.6" fill="#707070" />
<rect x="601.0" y="46.5" width="1.6" height="1.6" fill="#707070" />
<rect x="601.0" y="58.5" width="1.6" height="1.6" fill="#707070" />
<rect x="601.0" y="70.5" width="1.6" height="1.6" fill="#707070" />
<rect x="601.0" y="82.5" width="1.6" height="1.6" fill="#707070" />
<rect x="601.0" y="94.5" width="1.6" height="1.6" fill="#707070" />
<rect x="601.0" y="106.5" width="1.6" height="1.6" fill="#707070" />
<rect x="601.0" y="118.5" width="1.6" height="1.6" fill="#707070" />
<rect x="601.0" y="130.5" width="1.6" height="1.6" fill="#707070" />
<rect x="601.0" y="142.5" width="1.6" height="1.6" fill="#707070" />
<rect x="601.0" y="154.5" width="1.6" height="1.6" fill="#707070" />
<rect x="601.0" y="166.5" width="1.6" height="1.6" fill="#707070" />
<rect x="601.0" y="178.5" width="1.6" height="1.6" fill="#707070" />
<rect x="601.0" y="190.5" width="1.6" height="1.6" fill="#707070" />
<rect x="601.0" y="202.5" width="1.6" height="1.6" fill="#707070" />
<rect x="601.0" y="214.5" width="1.6" height="1.6" fill="#707070" />
<rect x="601.0" y="226.5" width="1.6" height="1.6" fill="#707070" />
<rect x="601.0" y="238.5" width="1.6" height="1.6" fill="#707070" />
<rect x="601.0" y="250.5" width="1.6" height="1.6" fill="#707070" />
<rect x="601.0" y="262.5" width="1.6" height="1.6" fill="#707070" />
<rect x="601.0" y="274.5" width="1.6" height="1.6" fill="#707070" />
<rect x="601.0" y="286.5" width="1.6" height="1.6" fill="#707070" />
<rect x="601.0" y="298.5" width="1.6" height="1.6" fill="#707070" />
<rect x="601.0" y="310.5" width="1.6" height="1.6" fill="#707070" />
<rect x="601.0" y="322.5" width="1.6" height="1.6" fill="#707070" />
<rect x="601.0" y="334.5" width="1.6" height="1.6" fill="#707070" />
<rect x="601.0" y="346.5" width="1.6" height="1.6" fill="#707070" />
<rect x="601.0" y="358.5" width="1.6" height="1.6" fill="#707070" />
<rect x="601.0" y="370.5" width="1.6" height="1.6" fill="#707070" />
<rect x="601.0" y="382.5" width="1.6" height="1.6" fill="#707070" />
<rect x="601.0" y="394.5" width="1.6" height="1.6" fill="#707070" />
<rect x="601.0" y="406.5" width="1.6" height="1.6" fill="#707070" />
<rect x="601.0" y="418.5" width="1.6" height="1.6" fill="#707070" />
<rect x="601.0" y="430.5" width="1.6" height="1.6" fill="#707070" />
<rect x="601.0" y="442.5" width="1.6" height="1.6" fill="#707070" />
<rect x="601.0" y="454.5" width="1.6" height="1.6" fill="#707070" />
<rect x="601.0" y="466.5" width="1.6" height="1.6" fill="#707070" />
<rect x="601.0" y="478.5" width="1.6" height="1.6" fill="#707070" />
<rect x="601.0" y="490.5" width="1.6" height="1.6" fill="#707070" />
<rect x="601.0" y="502.5" width="1.6" height="1.6" fill="#707070" />
<rect x="601.0" y="514.5" width="1.6" height="1.6" fill="#707070" />
<rect x="601.0" y="526.5" width="1.6" height="1.6" fill="#707070" />
<rect x="601.0" y="538.5" width="1.6" height="1.6" fill="#707070" />
<rect x="601.0" y="550.5" width="1.6" height="1.6" fill="#707070" />
<rect x="601.0" y="562.5" width="1.6" height="1.6" fill="#707070" />
<rect x="601.0" y="574.5" width="1.6" height="1.6" fill="#707070" />
<rect x="601.0" y="586.5" width="1.6" height="1.6" fill="#707070" />
<rect x="601.0" y="598.5" width="1.6" height="1.6" fill="#707070" />
<rect x="601.0" y="610.5" width="1.6" height="1.6" fill="#707070" />
<rect x="661.0" y="34.5" width="1.6" height="1.6" fill="#707070" />
<rect x="661.0" y="46.5" width="1.6" height="1.6" fill="#707070" />
<rect x="661.0" y="58.5" width="1.6" height="1.6" fill="#707070" />
<rect x="661.0" y="70.5" width="1.6" height="1.6" fill="#707070" />
<rect x="661.0" y="82.5" width="1.6" height="1.6" fill="#707070" />
<rect x="661.0" y="94.5" width="1.6" height="1.6" fill="#707070" />
<rect x="661.0" y="106.5" width="1.6" height="1.6" fill="#707070" />
<rect x="661.0" y="118.5" width="1.6" height="1.6" fill="#707070" />
<rect x="661.0" y="130.5" width="1.6" height="1.6" fill="#707070" />
<rect x="661.0" y="142.5" width="1.6" height="1.6" fill="#707070" />
<rect x="661.0" y="154.5" width="1.6" height="1.6" fill="#707070" />
<rect x="661.0" y="166.5" width="1.6" height="1.6" fill="#707070" />
<rect x="661.0" y="178.5" width="1.6" height="1.6" fill="#707070" />
<rect x="661.0" y="190.5" width="1.6" height="1.6" fill="#707070" />
<rect x="661.0" y="202.5" width="1.6" height="1.6" fill="#707070" />
<rect x="661.0" y="214.5" width="1.6" height="1.6" fill="#707070" />
<rect x="661.0" y="226.5" width="1.6" height="1.6" fill="#707070" />
<rect x="661.0" y="238.5" width="1.6" height="1.6" fill="#707070" />
<rect x="661.0" y="250.5" width="1.6" height="1.6" fill="#707070" />
<rect x="661.0" y="262.5" width="1.6" height="1.6" fill="#707070" />
<rect x="661.0" y="274.5" width="1.6" height="1.6" fill="#707070" />
<rect x="661.0" y="286.5" width="1.6" height="1.6" fill="#707070" />
<rect x="661.0" y="298.5" width="1.6" height="1.6" fill="#707070" />
<rect x="661.0" y="310.5" width="1.6" height="1.6" fill="#707070" />
<rect x="661.0" y="322.5" width="1.6" height="1.6" fill="#707070" />
<rect x="661.0" y="334.5" width="1.6" height="1.6" fill="#707070" />
<rect x="661.0" y="346.5" width="1.6" height="1.6" fill="#707070" />
<rect x="661.0" y="358.5" width="1.6" height="1.6" fill="#707070" />
<rect x="661.0" y="370.5" width="1.6" height="1.6" fill="#707070" />
<rect x="661.0" y="382.5" width="1.6" height="1.6" fill="#707070" />
<rect x="661.0" y="394.5" width="1.6" height="1.6" fill="#707070" />
<rect x="661.0" y="406.5" width="1.6" height="1.6" fill="#707070" />
<rect x="661.0" y="418.5" width="1.6" height="1.6" fill="#707070" />
<rect x="661.0" y="430.5" width="1.6" height="1.6" fill="#707070" />
<rect x="661.0" y="442.5" width="1.6" height="1.6" fill="#707070" />
<rect x="661.0" y="454.5" width="1.6" height="1.6" fill="#707070" />
<rect x="661.0" y="466.5" width="1.6" height="1.6" fill="#707070" />
<rect x="661.0" y="478.5" width="1.6" height="1.6" fill="#707070" />
<rect x="661.0" y="490.5" width="1.6" height="1.6" fill="#707070" />
<rect x="661.0" y="502.5" width="1.6" height="1.6" fill="#707070" />
<rect x="661.0" y="514.5" width="1.6" height="1.6" fill="#707070" />
<rect x="661.0" y="526.5" width="1.6" height="1.6" fill="#707070" />
<rect x="661.0" y="538.5" width="1.6" height="1.6" fill="#707070" />
<rect x="661.0" y="550.5" width="1.6" height="1.6" fill="#707070" />
<rect x="661.0" y="562.5" width="1.6" height="1.6" fill="#707070" />
<rect x="661.0" y="574.5" width="1.6" height="1.6" fill="#707070" />
<rect x="661.0" y="586.5" width="1.6" height="1.6" fill="#707070" />
<rect x="661.0" y="598.5" width="1.6" height="1.6" fill="#707070" />
<rect x="661.0" y="610.5" width="1.6" height="1.6" fill="#707070" />
<rect x="721.0" y="34.5" width="1.6" height="1.6" fill="#707070" />
<rect x="721.0" y="46.5" width="1.6" height="1.6" fill="#707070" />
<rect x="721.0" y="58.5" width="1.6" height="1.6" fill="#707070" />
<rect x="721.0" y="70.5" width="1.6" height="1.6" fill="#707070" />
<rect x="721.0" y="82.5" width="1.6" height="1.6" fill="#707070" />
<rect x="721.0" y="94.5" width="1.6" height="1.6" fill="#707070" />
<rect x="721.0" y="106.5" width="1.6" height="1.6" fill="#707070" />
<rect x="721.0" y="118.5" width="1.6" height="1.6" fill="#707070" />
<rect x="721.0" y="130.5" width="1.6" height="1.6" fill="#707070" />
<rect x="721.0" y="142.5" width="1.6" height="1.6" fill="#707070" />
<rect x="721.0" y="154.5" width="1.6" height="1.6" fill="#707070" />
<rect x="721.0" y="166.5" width="1.6" height="1.6" fill="#707070" />
<rect x="721.0" y="178.5" width="1.6" height="1.6" fill="#707070" />
<rect x="721.0" y="190.5" width="1.6" height="1.6" fill="#707070" />
<rect x="721.0" y="202.5" width="1.6" height="1.6" fill="#707070" />
<rect x="721.0" y="214.5" width="1.6" height="1.6" fill="#707070" />
<rect x="721.0" y="226.5" width="1.6" height="1.6" fill="#707070" />
<rect x="721.0" y="238.5" width="1.6" height="1.6" fill="#707070" />
<rect x="721.0" y="250.5" width="1.6" height="1.6" fill="#707070" />
<rect x="721.0" y="262.5" width="1.6" height="1.6" fill="#707070" />
<rect x="721.0" y="274.5" width="1.6" height="1.6" fill="#707070" />
<rect x="721.0" y="286.5" width="1.6" height="1.6" fill="#707070" />
<rect x="721.0" y="298.5" width="1.6" height="1.6" fill="#707070" />
<rect x="721.0" y="310.5" width="1.6" height="1.6" fill="#707070" />
<rect x="721.0" y="322.5" width="1.6" height="1.6" fill="#707070" />
<rect x="721.0" y="334.5" width="1.6" height="1.6" fill="#707070" />
<rect x="721.0" y="346.5" width="1.6" height="1.6" fill="#707070" />
<rect x="721.0" y="358.5" width="1.6" height="1.6" fill="#707070" />
<rect x="721.0" y="370.5" width="1.6" height="1.6" fill="#707070" />
<rect x="721.0" y="382.5" width="1.6" height="1.6" fill="#707070" />
<rect x="721.0" y="394.5" width="1.6" height="1.6" fill="#707070" />
<rect x="721.0" y="406.5" width="1.6" height="1.6" fill="#707070" />
<rect x="721.0" y="418.5" width="1.6" height="1.6" fill="#707070" />
<rect x="721.0" y="430.5" width="1.6" height="1.6" fill="#707070" />
<rect x="721.0" y="442.5" width="1.6" height="1.6" fill="#707070" />
<rect x="721.0" y="454.5" width="1.6" height="1.6" fill="#707070" />
<rect x="721.0" y="466.5" width="1.6" height="1.6" fill="#707070" />
<rect x="721.0" y="478.5" width="1.6" height="1.6" fill="#707070" />
<rect x="721.0" y="490.5" width="1.6" height="1.6" fill="#707070" />
<rect x="721.0" y="502.5" width="1.6" height="1.6" fill="#707070" />
<rect x="721.0" y="514.5" width="1.6" height="1.6" fill="#707070" />
<rect x="721.0" y="526.5" width="1.6" height="1.6" fill="#707070" />
<rect x="721.0" y="538.5" width="1.6" height="1.6" fill="#707070" />
<rect x="721.0" y="550.5" width="1.6" height="1.6" fill="#707070" />
<rect x="721.0" y="562.5" width="1.6" height="1.6" fill="#707070" />
<rect x="721.0" y="574.5" width="1.6" height="1.6" fill="#707070" />
<rect x="721.0" y="586.5" width="1.6" height="1.6" fill="#707070" />
<rect x="721.0" y="598.5" width="1.6" height="1.6" fill="#707070" />
<rect x="721.0" y="610.5" width="1.6" height="1.6" fill="#707070" />
<rect x="781.0" y="34.5" width="1.6" height="1.6" fill="#707070" />
<rect x="781.0" y="46.5" width="1.6" height="1.6" fill="#707070" />
<rect x="781.0" y="58.5" width="1.6" height="1.6" fill="#707070" />
<rect x="781.0" y="70.5" width="1.6" height="1.6" fill="#707070" />
<rect x="781.0" y="82.5" width="1.6" height="1.6" fill="#707070" />
<rect x="781.0" y="94.5" width="1.6" height="1.6" fill="#707070" />
<rect x="781.0" y="106.5" width="1.6" height="1.6" fill="#707070" />
<rect x="781.0" y="118.5" width="1.6" height="1.6" fill="#707070" />
<rect x="781.0" y="130.5" width="1.6" height="1.6" fill="#707070" />
<rect x="781.0" y="142.5" width="1.6" height="1.6" fill="#707070" />
<rect x="781.0" y="154.5" width="1.6" height="1.6" fill="#707070" />
<rect x="781.0" y="166.5" width="1.6" height="1.6" fill="#707070" />
<rect x="781.0" y="178.5" width="1.6" height="1.6" fill="#707070" />
<rect x="781.0" y="190.5" width="1.6" height="1.6" fill="#707070" />
<rect x="781.0" y="202.5" width="1.6" height="1.6" fill="#707070" />
<rect x="781.0" y="214.5" width="1.6" height="1.6" fill="#707070" />
<rect x="781.0" y="226.5" width="1.6" height="1.6" fill="#707070" />
<rect x="781.0" y="238.5" width="1.6" height="1.6" fill="#707070" />
<rect x="781.0" y="250.5" width="1.6" height="1.6" fill="#707070" />
<rect x="781.0" y="262.5" width="1.6" height="1.6" fill="#707070" />
<rect x="781.0" y="274.5" width="1.6" height="1.6" fill="#707070" />
<rect x="781.0" y="286.5" width="1.6" height="1.6" fill="#707070" />
<rect x="781.0" y="298.5" width="1.6" height="1.6" fill="#707070" />
<rect x="781.0" y="310.5" width="1.6" height="1.6" fill="#707070" />
<rect x="781.0" y="322.5" width="1.6" height="1.6" fill="#707070" />
<rect x="781.0" y="334.5" width="1.6" height="1.6" fill="#707070" />
<rect x="781.0" y="346.5" width="1.6" height="1.6" fill="#707070" />
<rect x="781.0" y="358.5" width="1.6" height="1.6" fill="#707070" />
<rect x="781.0" y="370.5" width="1.6" height="1.6" fill="#707070" />
<rect x="781.0" y="382.5" width="1.6" height="1.6" fill="#707070" />
<rect x="781.0" y="394.5" width="1.6" height="1.6" fill="#707070" />
<rect x="781.0" y="406.5" width="1.6" height="1.6" fill="#707070" />
<rect x="781.0" y="418.5" width="1.6" height="1.6" fill="#707070" />
<rect x="781.0" y="430.5" width="1.6" height="1.6" fill="#707070" />
<rect x="781.0" y="442.5" width="1.6" height="1.6" fill="#707070" />
<rect x="781.0" y="454.5" width="1.6" height="1.6" fill="#707070" />
<rect x="781.0" y="466.5" width="1.6" height="1.6" fill="#707070" />
<rect x="781.0" y="478.5" width="1.6" height="1.6" fill="#707070" />
<rect x="781.0" y="490.5" width="1.6" height="1.6" fill="#707070" />
<rect x="781.0" y="502.5" width="1.6" height="1.6" fill="#707070" />
<rect x="781.0" y="514.5" width="1.6" height="1.6" fill="#707070" />
<rect x="781.0" y="526.5" width="1.6" height="1.6" fill="#707070" />
<rect x="781.0" y="538.5" width="1.6" height="1.6" fill="#707070" />
<rect x="781.0" y="550.5" width="1.6" height="1.6" fill="#707070" />
<rect x="781.0" y="562.5" width="1.6" height="1.6" fill="#707070" />
<rect x="781.0" y="574.5" width="1.6" height="1.6" fill="#707070" />
<rect x="781.0" y="586.5" width="1.6" height="1.6" fill="#707070" />
<rect x="781.0" y="598.5" width="1.6" height="1.6" fill="#707070" />
<rect x="781.0" y="610.5" width="1.6" height="1.6" fill="#707070" />
<rect x="841.0" y="34.5" width="1.6" height="1.6" fill="#707070" />
<rect x="841.0" y="46.5" width="1.6" height="1.6" fill="#707070" />
<rect x="841.0" y="58.5" width="1.6" height="1.6" fill="#707070" />
<rect x="841.0" y="70.5" width="1.6" height="1.6" fill="#707070" />
<rect x="841.0" y="82.5" width="1.6" height="1.6" fill="#707070" />
<rect x="841.0" y="94.5" width="1.6" height="1.6" fill="#707070" />
<rect x="841.0" y="106.5" width="1.6" height="1.6" fill="#707070" />
<rect x="841.0" y="118.5" width="1.6" height="1.6" fill="#707070" />
<rect x="841.0" y="130.5" width="1.6" height="1.6" fill="#707070" />
<rect x="841.0" y="142.5" width="1.6" height="1.6" fill="#707070" />
<rect x="841.0" y="154.5" width="1.6" height="1.6" fill="#707070" />
<rect x="841.0" y="166.5" width="1.6" height="1.6" fill="#707070" />
<rect x="841.0" y="178.5" width="1.6" height="1.6" fill="#707070" />
<rect x="841.0" y="190.5" width="1.6" height="1.6" fill="#707070" />
<rect x="841.0" y="202.5" width="1.6" height="1.6" fill="#707070" />
<rect x="841.0" y="214.5" width="1.6" height="1.6" fill="#707070" />
<rect x="841.0" y="226.5" width="1.6" height="1.6" fill="#707070" />
<rect x="841.0" y="238.5" width="1.6" height="1.6" fill="#707070" />
<rect x="841.0" y="250.5" width="1.6" height="1.6" fill="#707070" />
<rect x="841.0" y="262.5" width="1.6" height="1.6" fill="#707070" />
<rect x="841.0" y="274.5" width="1.6" height="1.6" fill="#707070" />
<rect x="841.0" y="286.5" width="1.6" height="1.6" fill="#707070" />
<rect x="841.0" y="298.5" width="1.6" height="1.6" fill="#707070" />
<rect x="841.0" y="310.5" width="1.6" height="1.6" fill="#707070" />
<rect x="841.0" y="322.5" width="1.6" height="1.6" fill="#707070" />
<rect x="841.0" y="334.5" width="1.6" height="1.6" fill="#707070" />
<rect x="841.0" y="346.5" width="1.6" height="1.6" fill="#707070" />
<rect x="841.0" y="358.5" width="1.6" height="1.6" fill="#707070" />
<rect x="841.0" y="370.5" width="1.6" height="1.6" fill="#707070" />
<rect x="841.0" y="382.5" width="1.6" height="1.6" fill="#707070" />
<rect x="841.0" y="394.5" width="1.6" height="1.6" fill="#707070" />
<rect x="841.0" y="406.5" width="1.6" height="1.6" fill="#707070" />
<rect x="841.0" y="418.5" width="1.6" height="1.6" fill="#707070" />
<rect x="841.0" y="430.5" width="1.6" height="1.6" fill="#707070" />
<rect x="841.0" y="442.5" width="1.6" height="1.6" fill="#707070" />
<rect x="841.0" y="454.5" width="1.6" height="1.6" fill="#707070" />
<rect x="841.0" y="466.5" width="1.6" height="1.6" fill="#707070" />
<rect x="841.0" y="478.5" width="1.6" height="1.6" fill="#707070" />
<rect x="841.0" y="490.5" width="1.6" height="1.6" fill="#707070" />
<rect x="841.0" y="502.5" width="1.6" height="1.6" fill="#707070" />
<rect x="841.0" y="514.5" width="1.6" height="1.6" fill="#707070" />
<rect x="841.0" y="526.5" width="1.6" height="1.6" fill="#707070" />
<rect x="841.0" y="538.5" width="1.6" height="1.6" fill="#707070" />
<rect x="841.0" y="550.5" width="1.6" height="1.6" fill="#707070" />
<rect x="841.0" y="562.5" width="1.6" height="1.6" fill="#707070" />
<rect x="841.0" y="574.5" width="1.6" height="1.6" fill="#707070" />
<rect x="841.0" y="586.5" width="1.6" height="1.6" fill="#707070" />
<rect x="841.0" y="598.5" width="1.6" height="1.6" fill="#707070" />
<rect x="841.0" y="610.5" width="1.6" height="1.6" fill="#707070" />
<rect x="901.0" y="34.5" width="1.6" height="1.6" fill="#707070" />
<rect x="901.0" y="46.5" width="1.6" height="1.6" fill="#707070" />
<rect x="901.0" y="58.5" width="1.6" height="1.6" fill="#707070" />
<rect x="901.0" y="70.5" width="1.6" height="1.6" fill="#707070" />
<rect x="901.0" y="82.5" width="1.6" height="1.6" fill="#707070" />
<rect x="901.0" y="94.5" width="1.6" height="1.6" fill="#707070" />
<rect x="901.0" y="106.5" width="1.6" height="1.6" fill="#707070" />
<rect x="901.0" y="118.5" width="1.6" height="1.6" fill="#707070" />
<rect x="901.0" y="130.5" width="1.6" height="1.6" fill="#707070" />
<rect x="901.0" y="142.5" width="1.6" height="1.6" fill="#707070" />
<rect x="901.0" y="154.5" width="1.6" height="1.6" fill="#707070" />
<rect x="901.0" y="166.5" width="1.6" height="1.6" fill="#707070" />
<rect x="901.0" y="178.5" width="1.6" height="1.6" fill="#707070" />
<rect x="901.0" y="190.5" width="1.6" height="1.6" fill="#707070" />
<rect x="901.0" y="202.5" width="1.6" height="1.6" fill="#707070" />
<rect x="901.0" y="214.5" width="1.6" height="1.6" fill="#707070" />
<rect x="901.0" y="226.5" width="1.6" height="1.6" fill="#707070" />
<rect x="901.0" y="238.5" width="1.6" height="1.6" fill="#707070" />
<rect x="901.0" y="250.5" width="1.6" height="1.6" fill="#707070" />
<rect x="901.0" y="262.5" width="1.6" height="1.6" fill="#707070" />
<rect x="901.0" y="274.5" width="1.6" height="1.6" fill="#707070" />
<rect x="901.0" y="286.5" width="1.6" height="1.6" fill="#707070" />
<rect x="901.0" y="298.5" width="1.6" height="1.6" fill="#707070" />
<rect x="901.0" y="310.5" width="1.6" height="1.6" fill="#707070" />
<rect x="901.0" y="322.5" width="1.6" height="1.6" fill="#707070" />
<rect x="901.0" y="334.5" width="1.6" height="1.6" fill="#707070" />
<rect x="901.0" y="346.5" width="1.6" height="1.6" fill="#707070" />
<rect x="901.0" y="358.5" width="1.6" height="1.6" fill="#707070" />
<rect x="901.0" y="370.5" width="1.6" height="1.6" fill="#707070" />
<rect x="901.0" y="382.5" width="1.6" height="1.6" fill="#707070" />
<rect x="901.0" y="394.5" width="1.6" height="1.6" fill="#707070" />
<rect x="901.0" y="406.5" width="1.6" height="1.6" fill="#707070" />
<rect x="901.0" y="418.5" width="1.6" height="1.6" fill="#707070" />
<rect x="901.0" y="430.5" width="1.6" height="1.6" fill="#707070" />
<rect x="901.0" y="442.5" width="1.6" height="1.6" fill="#707070" />
<rect x="901.0" y="454.5" width="1.6" height="1.6" fill="#707070" />
<rect x="901.0" y="466.5" width="1.6" height="1.6" fill="#707070" />
<rect x="901.0" y="478.5" width="1.6" height="1.6" fill="#707070" />
<rect x="901.0" y="490.5" width="1.6" height="1.6" fill="#707070" />
<rect x="901.0" y="502.5" width="1.6" height="1.6" fill="#707070" />
<rect x="901.0" y="514.5" width="1.6" height="1.6" fill="#707070" />
<rect x="901.0" y="526.5" width="1.6" height="1.6" fill="#707070" />
<rect x="901.0" y="538.5" width="1.6" height="1.6" fill="#707070" />
<rect x="901.0" y="550.5" width="1.6" height="1.6" fill="#707070" />
<rect x="901.0" y="562.5" width="1.6" height="1.6" fill="#707070" />
<rect x="901.0" y="574.5" width="1.6" height="1.6" fill="#707070" />
<rect x="901.0" y="586.5" width="1.6" height="1.6" fill="#707070" />
<rect x="901.0" y="598.5" width="1.6" height="1.6" fill="#707070" />
<rect x="901.0" y="610.5" width="1.6" height="1.6" fill="#707070" />
<rect x="37.0" y="82.5" width="1.6" height="1.6" fill="#707070" />
<rect x="49.0" y="82.5" width="1.6" height="1.6" fill="#707070" />
<rect x="61.0" y="82.5" width="1.6" height="1.6" fill="#707070" />
<rect x="73.0" y="82.5" width="1.6" height="1.6" fill="#707070" />
<rect x="85.0" y="82.5" width="1.6" height="1.6" fill="#707070" />
<rect x="97.0" y="82.5" width="1.6" height="1.6" fill="#707070" />
<rect x="109.0" y="82.5" width="1.6" height="1.6" fill="#707070" />
<rect x="121.0" y="82.5" width="1.6" height="1.6" fill="#707070" />
<rect x="133.0" y="82.5" width="1.6" height="1.6" fill="#707070" />
<rect x="145.0" y="82.5" width="1.6" height="1.6" fill="#707070" />
<rect x="157.0" y="82.5" width="1.6" height="1.6" fill="#707070" />
<rect x="169.0" y="82.5" width="1.6" height="1.6" fill="#707070" />
<rect x="181.0" y="82.5" width="1.6" height="1.6" fill="#707070" />
<rect x="193.0" y="82.5" width="1.6" height="1.6" fill="#707070" />
<rect x="205.0" y="82.5" width="1.6" height="1.6" fill="#707070" />
<rect x="217.0" y="82.5" width="1.6" height="1.6" fill="#707070" />
<rect x="229.0" y="82.5" width="1.6" height="1.6" fill="#707070" />
<rect x="241.0" y="82.5" width="1.6" height="1.6" fill="#707070" />
<rect x="253.0" y="82.5" width="1.6" height="1.6" fill="#707070" />
<rect x="265.0" y="82.5" width="1.6" height="1.6" fill="#707070" />
<rect x="277.0" y="82.5" width="1.6" height="1.6" fill="#707070" />
<rect x="289.0" y="82.5" width="1.6" height="1.6" fill="#707070" />
<rect x="301.0" y="82.5" width="1.6" height="1.6" fill="#707070" />
<rect x="313.0" y="82.5" width="1.6" height="1.6" fill="#707070" />
<rect x="325.0" y="82.5" width="1.6" height="1.6" fill="#707070" />
<rect x="337.0" y="82.5" width="1.6" height="1.6" fill="#707070" />
<rect x="349.0" y="82.5" width="1.6" height="1.6" fill="#707070" />
<rect x="361.0" y="82.5" width="1.6" height="1.6" fill="#707070" />
<rect x="373.0" y="82.5" width="1.6" height="1.6" fill="#707070" />
<rect x="385.0" y="82.5" width="1.6" height="1.6" fill="#707070" />
<rect x="397.0" y="82.5" width="1.6" height="1.6" fill="#707070" />
<rect x="409.0" y="82.5" width="1.6" height="1.6" fill="#707070" />
<rect x="421.0" y="82.5" width="1.6" height="1.6" fill="#707070" />
<rect x="433.0" y="82.5" width="1.6" height="1.6" fill="#707070" />
<rect x="445.0" y="82.5" width="1.6" height="1.6" fill="#707070" />
<rect x="457.0" y="82.5" width="1.6" height="1.6" fill="#707070" />
<rect x="469.0" y="82.5" width="1.6" height="1.6" fill="#707070" />
<rect x="481.0" y="82.5" width="1.6" height="1.6" fill="#707070" />
<rect x="493.0" y="82.5" width="1.6" height="1.6" fill="#707070" />
<rect x="505.0" y="82.5" width="1.6" height="1.6" fill="#707070" />
<rect x="517.0" y="82.5" width="1.6" height="1.6" fill="#707070" />
<rect x="529.0" y="82.5" width="1.6" height="1.6" fill="#707070" />
<rect x="541.0" y="82.5" width="1.6" height="1.6" fill="#707070" />
<rect x="553.0" y="82.5" width="1.6" height="1.6" fill="#707070" />
<rect x="565.0" y="82.5" width="1.6" height="1.6" fill="#707070" />
<rect x="577.0" y="82.5" width="1.6" height="1.6" fill="#707070" />
<rect x="589.0" y="82.5" width="1.6" height="1.6" fill="#707070" />
<rect x="601.0" y="82.5" width="1.6" height="1.6" fill="#707070" />
<rect x="613.0" y="82.5" width="1.6" height="1.6" fill="#707070" />
<rect x="625.0" y="82.5" width="1.6" height="1.6" fill="#707070" />
<rect x="637.0" y="82.5" width="1.6" height="1.6" fill="#707070" />
<rect x="649.0" y="82.5" width="1.6" height="1.6" fill="#707070" />
<rect x="661.0" y="82.5" width="1.6" height="1.6" fill="#707070" />
<rect x="673.0" y="82.5" width="1.6" height="1.6" fill="#707070" />
<rect x="685.0" y="82.5" width="1.6" height="1.6" fill="#707070" />
<rect x="697.0" y="82.5" width="1.6" height="1.6" fill="#707070" />
<rect x="709.0" y="82.5" width="1.6" height="1.6" fill="#707070" />
<rect x="721.0" y="82.5" width="1.6" height="1.6" fill="#707070" />
<rect x="733.0" y="82.5" width="1.6" height="1.6" fill="#707070" />
<rect x="745.0" y="82.5" width="1.6" height="1.6" fill="#707070" />
<rect x="757.0" y="82.5" width="1.6" height="1.6" fill="#707070" />
<rect x="769.0" y="82.5" width="1.6" height="1.6" fill="#707070" />
<rect x="781.0" y="82.5" width="1.6" height="1.6" fill="#707070" />
<rect x="793.0" y="82.5" width="1.6" height="1.6" fill="#707070" />
<rect x="805.0" y="82.5" width="1.6" height="1.6" fill="#707070" />
<rect x="817.0" y="82.5" width="1.6" height="1.6" fill="#707070" />
<rect x="829.0" y="82.5" width="1.6" height="1.6" fill="#707070" />
<rect x="841.0" y="82.5" width="1.6" height="1.6" fill="#707070" />
<rect x="853.0" y="82.5" width="1.6" height="1.6" fill="#707070" />
<rect x="865.0" y="82.5" width="1.6" height="1.6" fill="#707070" />
<rect x="877.0" y="82.5" width="1.6" height="1.6" fill="#707070" />
<rect x="889.0" y="82.5" width="1.6" height="1.6" fill="#707070" />
<rect x="901.0" y="82.5" width="1.6" height="1.6" fill="#707070" />
<rect x="913.0" y="82.5" width="1.6" height="1.6" fill="#707070" />
<rect x="925.0" y="82.5" width="1.6" height="1.6" fill="#707070" />
<rect x="37.0" y="142.5" width="1.6" height="1.6" fill="#707070" />
<rect x="49.0" y="142.5" width="1.6" height="1.6" fill="#707070" />
<rect x="61.0" y="142.5" width="1.6" height="1.6" fill="#707070" />
<rect x="73.0" y="142.5" width="1.6" height="1.6" fill="#707070" />
<rect x="85.0" y="142.5" width="1.6" height="1.6" fill="#707070" />
<rect x="97.0" y="142.5" width="1.6" height="1.6" fill="#707070" />
<rect x="109.0" y="142.5" width="1.6" height="1.6" fill="#707070" />
<rect x="121.0" y="142.5" width="1.6" height="1.6" fill="#707070" />
<rect x="133.0" y="142.5" width="1.6" height="1.6" fill="#707070" />
<rect x="145.0" y="142.5" width="1.6" height="1.6" fill="#707070" />
<rect x="157.0" y="142.5" width="1.6" height="1.6" fill="#707070" />
<rect x="169.0" y="142.5" width="1.6" height="1.6" fill="#707070" />
<rect x="181.0" y="142.5" width="1.6" height="1.6" fill="#707070" />
<rect x="193.0" y="142.5" width="1.6" height="1.6" fill="#707070" />
<rect x="205.0" y="142.5" width="1.6" height="1.6" fill="#707070" />
<rect x="217.0" y="142.5" width="1.6" height="1.6" fill="#707070" />
<rect x="229.0" y="142.5" width="1.6" height="1.6" fill="#707070" />
<rect x="241.0" y="142.5" width="1.6" height="1.6" fill="#707070" />
<rect x="253.0" y="142.5" width="1.6" height="1.6" fill="#707070" />
<rect x="265.0" y="142.5" width="1.6" height="1.6" fill="#707070" />
<rect x="277.0" y="142.5" width="1.6" height="1.6" fill="#707070" />
<rect x="289.0" y="142.5" width="1.6" height="1.6" fill="#707070" />
<rect x="301.0" y="142.5" width="1.6" height="1.6" fill="#707070" />
<rect x="313.0" y="142.5" width="1.6" height="1.6" fill="#707070" />
<rect x="325.0" y="142.5" width="1.6" height="1.6" fill="#707070" />
<rect x="337.0" y="142.5" width="1.6" height="1.6" fill="#707070" />
<rect x="349.0" y="142.5" width="1.6" height="1.6" fill="#707070" />
<rect x="361.0" y="142.5" width="1.6" height="1.6" fill="#707070" />
<rect x="373.0" y="142.5" width="1.6" height="1.6" fill="#707070" />
<rect x="385.0" y="142.5" width="1.6" height="1.6" fill="#707070" />
<rect x="397.0" y="142.5" width="1.6" height="1.6" fill="#707070" />
<rect x="409.0" y="142.5" width="1.6" height="1.6" fill="#707070" />
<rect x="421.0" y="142.5" width="1.6" height="1.6" fill="#707070" />
<rect x="433.0" y="142.5" width="1.6" height="1.6" fill="#707070" />
<rect x="445.0" y="142.5" width="1.6" height="1.6" fill="#707070" />
<rect x="457.0" y="142.5" width="1.6" height="1.6" fill="#707070" />
<rect x="469.0" y="142.5" width="1.6" height="1.6" fill="#707070" />
<rect x="481.0" y="142.5" width="1.6" height="1.6" fill="#707070" />
<rect x="493.0" y="142.5" width="1.6" height="1.6" fill="#707070" />
<rect x="505.0" y="142.5" width="1.6" height="1.6" fill="#707070" />
<rect x="517.0" y="142.5" width="1.6" height="1.6" fill="#707070" />
<rect x="529.0" y="142.5" width="1.6" height="1.6" fill="#707070" />
<rect x="541.0" y="142.5" width="1.6" height="1.6" fill="#707070" />
<rect x="553.0" y="142.5" width="1.6" height="1.6" fill="#707070" />
<rect x="565.0" y="142.5" width="1.6" height="1.6" fill="#707070" />
<rect x="577.0" y="142.5" width="1.6" height="1.6" fill="#707070" />
<rect x="589.0" y="142.5" width="1.6" height="1.6" fill="#707070" />
<rect x="601.0" y="142.5" width="1.6" height="1.6" fill="#707070" />
<rect x="613.0" y="142.5" width="1.6" height="1.6" fill="#707070" />
<rect x="625.0" y="142.5" width="1.6" height="1.6" fill="#707070" />
<rect x="637.0" y="142.5" width="1.6" height="1.6" fill="#707070" />
<rect x="649.0" y="142.5" width="1.6" height="1.6" fill="#707070" />
<rect x="661.0" y="142.5" width="1.6" height="1.6" fill="#707070" />
<rect x="673.0" y="142.5" width="1.6" height="1.6" fill="#707070" />
<rect x="685.0" y="142.5" width="1.6" height="1.6" fill="#707070" />
<rect x="697.0" y="142.5" width="1.6" height="1.6" fill="#707070" />
<rect x="709.0" y="142.5" width="1.6" height="1.6" fill="#707070" />
<rect x="721.0" y="142.5" width="1.6" height="1.6" fill="#707070" />
<rect x="733.0" y="142.5" width="1.6" height="1.6" fill="#707070" />
<rect x="745.0" y="142.5" width="1.6" height="1.6" fill="#707070" />
<rect x="757.0" y="142.5" width="1.6" height="1.6" fill="#707070" />
<rect x="769.0" y="142.5" width="1.6" height="1.6" fill="#707070" />
<rect x="781.0" y="142.5" width="1.6" height="1.6" fill="#707070" />
<rect x="793.0" y="142.5" width="1.6" height="1.6" fill="#707070" />
<rect x="805.0" y="142.5" width="1.6" height="1.6" fill="#707070" />
<rect x="817.0" y="142.5" width="1.6" height="1.6" fill="#707070" />
<rect x="829.0" y="142.5" width="1.6" height="1.6" fill="#707070" />
<rect x="841.0" y="142.5" width="1.6" height="1.6" fill="#707070" />
<rect x="853.0" y="142.5" width="1.6" height="1.6" fill="#707070" />
<rect x="865.0" y="142.5" width="1.6" height="1.6" fill="#707070" />
<rect x="877.0" y="142.5" width="1.6" height="1.6" fill="#707070" />
<rect x="889.0" y="142.5" width="1.6" height="1.6" fill="#707070" />
<rect x="901.0" y="142.5" width="1.6" height="1.6" fill="#707070" />
<rect x="913.0" y="142.5" width="1.6" height="1.6" fill="#707070" />
<rect x="925.0" y="142.5" width="1.6" height="1.6" fill="#707070" />
<rect x="37.0" y="202.5" width="1.6" height="1.6" fill="#707070" />
<rect x="49.0" y="202.5" width="1.6" height="1.6" fill="#707070" />
<rect x="61.0" y="202.5" width="1.6" height="1.6" fill="#707070" />
<rect x="73.0" y="202.5" width="1.6" height="1.6" fill="#707070" />
<rect x="85.0" y="202.5" width="1.6" height="1.6" fill="#707070" />
<rect x="97.0" y="202.5" width="1.6" height="1.6" fill="#707070" />
<rect x="109.0" y="202.5" width="1.6" height="1.6" fill="#707070" />
<rect x="121.0" y="202.5" width="1.6" height="1.6" fill="#707070" />
<rect x="133.0" y="202.5" width="1.6" height="1.6" fill="#707070" />
<rect x="145.0" y="202.5" width="1.6" height="1.6" fill="#707070" />
<rect x="157.0" y="202.5" width="1.6" height="1.6" fill="#707070" />
<rect x="169.0" y="202.5" width="1.6" height="1.6" fill="#707070" />
<rect x="181.0" y="202.5" width="1.6" height="1.6" fill="#707070" />
<rect x="193.0" y="202.5" width="1.6" height="1.6" fill="#707070" />
<rect x="205.0" y="202.5" width="1.6" height="1.6" fill="#707070" />
<rect x="217.0" y="202.5" width="1.6" height="1.6" fill="#707070" />
<rect x="229.0" y="202.5" width="1.6" height="1.6" fill="#707070" />
<rect x="241.0" y="202.5" width="1.6" height="1.6" fill="#707070" />
<rect x="253.0" y="202.5" width="1.6" height="1.6" fill="#707070" />
<rect x="265.0" y="202.5" width="1.6" height="1.6" fill="#707070" />
<rect x="277.0" y="202.5" width="1.6" height="1.6" fill="#707070" />
<rect x="289.0" y="202.5" width="1.6" height="1.6" fill="#707070" />
<rect x="301.0" y="202.5" width="1.6" height="1.6" fill="#707070" />
<rect x="313.0" y="202.5" width="1.6" height="1.6" fill="#707070" />
<rect x="325.0" y="202.5" width="1.6" height="1.6" fill="#707070" />
<rect x="337.0" y="202.5" width="1.6" height="1.6" fill="#707070" />
<rect x="349.0" y="202.5" width="1.6" height="1.6" fill="#707070" />
<rect x="361.0" y="202.5" width="1.6" height="1.6" fill="#707070" />
<rect x="373.0" y="202.5" width="1.6" height="1.6" fill="#707070" />
<rect x="385.0" y="202.5" width="1.6" height="1.6" fill="#707070" />
<rect x="397.0" y="202.5" width="1.6" height="1.6" fill="#707070" />
<rect x="409.0" y="202.5" width="1.6" height="1.6" fill="#707070" />
<rect x="421.0" y="202.5" width="1.6" height="1.6" fill="#707070" />
<rect x="433.0" y="202.5" width="1.6" height="1.6" fill="#707070" />
<rect x="445.0" y="202.5" width="1.6" height="1.6" fill="#707070" />
<rect x="457.0" y="202.5" width="1.6" height="1.6" fill="#707070" />
<rect x="469.0" y="202.5" width="1.6" height="1.6" fill="#707070" />
<rect x="481.0" y="202.5" width="1.6" height="1.6" fill="#707070" />
<rect x="493.0" y="202.5" width="1.6" height="1.6" fill="#707070" />
<rect x="505.0" y="202.5" width="1.6" height="1.6" fill="#707070" />
<rect x="517.0" y="202.5" width="1.6" height="1.6" fill="#707070" />
<rect x="529.0" y="202.5" width="1.6" height="1.6" fill="#707070" />
<rect x="541.0" y="202.5" width="1.6" height="1.6" fill="#707070" />
<rect x="553.0" y="202.5" width="1.6" height="1.6" fill="#707070" />
<rect x="565.0" y="202.5" width="1.6" height="1.6" fill="#707070" />
<rect x="577.0" y="202.5" width="1.6" height="1.6" fill="#707070" />
<rect x="589.0" y="202.5" width="1.6" height="1.6" fill="#707070" />
<rect x="601.0" y="202.5" width="1.6" height="1.6" fill="#707070" />
<rect x="613.0" y="202.5" width="1.6" height="1.6" fill="#707070" />
<rect x="625.0" y="202.5" width="1.6" height="1.6" fill="#707070" />
<rect x="637.0" y="202.5" width="1.6" height="1.6" fill="#707070" />
<rect x="649.0" y="202.5" width="1.6" height="1.6" fill="#707070" />
<rect x="661.0" y="202.5" width="1.6" height="1.6" fill="#707070" />
<rect x="673.0" y="202.5" width="1.6" height="1.6" fill="#707070" />
<rect x="685.0" y="202.5" width="1.6" height="1.6" fill="#707070" />
<rect x="697.0" y="202.5" width="1.6" height="1.6" fill="#707070" />
<rect x="709.0" y="202.5" width="1.6" height="1.6" fill="#707070" />
<rect x="721.0" y="202.5" width="1.6" height="1.6" fill="#707070" />
<rect x="733.0" y="202.5" width="1.6" height="1.6" fill="#707070" />
<rect x="745.0" y="202.5" width="1.6" height="1.6" fill="#707070" />
<rect x="757.0" y="202.5" width="1.6" height="1.6" fill="#707070" />
<rect x="769.0" y="202.5" width="1.6" height="1.6" fill="#707070" />
<rect x="781.0" y="202.5" width="1.6" height="1.6" fill="#707070" />
<rect x="793.0" y="202.5" width="1.6" height="1.6" fill="#707070" />
<rect x="805.0" y="202.5" width="1.6" height="1.6" fill="#707070" />
<rect x="817.0" y="202.5" width="1.6" height="1.6" fill="#707070" />
<rect x="829.0" y="202.5" width="1.6" height="1.6" fill="#707070" />
<rect x="841.0" y="202.5" width="1.6" height="1.6" fill="#707070" />
<rect x="853.0" y="202.5" width="1.6" height="1.6" fill="#707070" />
<rect x="865.0" y="202.5" width="1.6" height="1.6" fill="#707070" />
<rect x="877.0" y="202.5" width="1.6" height="1.6" fill="#707070" />
<rect x="889.0" y="202.5" width="1.6" height="1.6" fill="#707070" />
<rect x="901.0" y="202.5" width="1.6" height="1.6" fill="#707070" />
<rect x="913.0" y="202.5" width="1.6" height="1.6" fill="#707070" />
<rect x="925.0" y="202.5" width="1.6" height="1.6" fill="#707070" />
<rect x="37.0" y="262.5" width="1.6" height="1.6" fill="#707070" />
<rect x="49.0" y="262.5" width="1.6" height="1.6" fill="#707070" />
<rect x="61.0" y="262.5" width="1.6" height="1.6" fill="#707070" />
<rect x="73.0" y="262.5" width="1.6" height="1.6" fill="#707070" />
<rect x="85.0" y="262.5" width="1.6" height="1.6" fill="#707070" />
<rect x="97.0" y="262.5" width="1.6" height="1.6" fill="#707070" />
<rect x="109.0" y="262.5" width="1.6" height="1.6" fill="#707070" />
<rect x="121.0" y="262.5" width="1.6" height="1.6" fill="#707070" />
<rect x="133.0" y="262.5" width="1.6" height="1.6" fill="#707070" />
<rect x="145.0" y="262.5" width="1.6" height="1.6" fill="#707070" />
<rect x="157.0" y="262.5" width="1.6" height="1.6" fill="#707070" />
<rect x="169.0" y="262.5" width="1.6" height="1.6" fill="#707070" />
<rect x="181.0" y="262.5" width="1.6" height="1.6" fill="#707070" />
<rect x="193.0" y="262.5" width="1.6" height="1.6" fill="#707070" />
<rect x="205.0" y="262.5" width="1.6" height="1.6" fill="#707070" />
<rect x="217.0" y="262.5" width="1.6" height="1.6" fill="#707070" />
<rect x="229.0" y="262.5" width="1.6" height="1.6" fill="#707070" />
<rect x="241.0" y="262.5" width="1.6" height="1.6" fill="#707070" />
<rect x="253.0" y="262.5" width="1.6" height="1.6" fill="#707070" />
<rect x="265.0" y="262.5" width="1.6" height="1.6" fill="#707070" />
<rect x="277.0" y="262.5" width="1.6" height="1.6" fill="#707070" />
<rect x="289.0" y="262.5" width="1.6" height="1.6" fill="#707070" />
<rect x="301.0" y="262.5" width="1.6" height="1.6" fill="#707070" />
<rect x="313.0" y="262.5" width="1.6" height="1.6" fill="#707070" />
<rect x="325.0" y="262.5" width="1.6" height="1.6" fill="#707070" />
<rect x="337.0" y="262.5" width="1.6" height="1.6" fill="#707070" />
<rect x="349.0" y="262.5" width="1.6" height="1.6" fill="#707070" />
<rect x="361.0" y="262.5" width="1.6" height="1.6" fill="#707070" />
<rect x="373.0" y="262.5" width="1.6" height="1.6" fill="#707070" />
<rect x="385.0" y="262.5" width="1.6" height="1.6" fill="#707070" />
<rect x="397.0" y="262.5" width="1.6" height="1.6" fill="#707070" />
<rect x="409.0" y="262.5" width="1.6" height="1.6" fill="#707070" />
<rect x="421.0" y="262.5" width="1.6" height="1.6" fill="#707070" />
<rect x="433.0" y="262.5" width="1.6" height="1.6" fill="#707070" />
<rect x="445.0" y="262.5" width="1.6" height="1.6" fill="#707070" />
<rect x="457.0" y="262.5" width="1.6" height="1.6" fill="#707070" />
<rect x="469.0" y="262.5" width="1.6" height="1.6" fill="#707070" />
<rect x="481.0" y="262.5" width="1.6" height="1.6" fill="#707070" />
<rect x="493.0" y="262.5" width="1.6" height="1.6" fill="#707070" />
<rect x="505.0" y="262.5" width="1.6" height="1.6" fill="#707070" />
<rect x="517.0" y="262.5" width="1.6" height="1.6" fill="#707070" />
<rect x="529.0" y="262.5" width="1.6" height="1.6" fill="#707070" />
<rect x="541.0" y="262.5" width="1.6" height="1.6" fill="#707070" />
<rect x="553.0" y="262.5" width="1.6" height="1.6" fill="#707070" />
<rect x="565.0" y="262.5" width="1.6" height="1.6" fill="#707070" />
<rect x="577.0" y="262.5" width="1.6" height="1.6" fill="#707070" />
<rect x="589.0" y="262.5" width="1.6" height="1.6" fill="#707070" />
<rect x="601.0" y="262.5" width="1.6" height="1.6" fill="#707070" />
<rect x="613.0" y="262.5" width="1.6" height="1.6" fill="#707070" />
<rect x="625.0" y="262.5" width="1.6" height="1.6" fill="#707070" />
<rect x="637.0" y="262.5" width="1.6" height="1.6" fill="#707070" />
<rect x="649.0" y="262.5" width="1.6" height="1.6" fill="#707070" />
<rect x="661.0" y="262.5" width="1.6" height="1.6" fill="#707070" />
<rect x="673.0" y="262.5" width="1.6" height="1.6" fill="#707070" />
<rect x="685.0" y="262.5" width="1.6" height="1.6" fill="#707070" />
<rect x="697.0" y="262.5" width="1.6" height="1.6" fill="#707070" />
<rect x="709.0" y="262.5" width="1.6" height="1.6" fill="#707070" />
<rect x="721.0" y="262.5" width="1.6" height="1.6" fill="#707070" />
<rect x="733.0" y="262.5" width="1.6" height="1.6" fill="#707070" />
<rect x="745.0" y="262.5" width="1.6" height="1.6" fill="#707070" />
<rect x="757.0" y="262.5" width="1.6" height="1.6" fill="#707070" />
<rect x="769.0" y="262.5" width="1.6" height="1.6" fill="#707070" />
<rect x="781.0" y="262.5" width="1.6" height="1.6" fill="#707070" />
<rect x="793.0" y="262.5" width="1.6" height="1.6" fill="#707070" />
<rect x="805.0" y="262.5" width="1.6" height="1.6" fill="#707070" />
<rect x="817.0" y="262.5" width="1.6" height="1.6" fill="#707070" />
<rect x="829.0" y="262.5" width="1.6" height="1.6" fill="#707070" />
<rect x="841.0" y="262.5" width="1.6" height="1.6" fill="#707070" />
<rect x="853.0" y="262.5" width="1.6" height="1.6" fill="#707070" />
<rect x="865.0" y="262.5" width="1.6" height="1.6" fill="#707070" />
<rect x="877.0" y="262.5" width="1.6" height="1.6" fill="#707070" />
<rect x="889.0" y="262.5" width="1.6" height="1.6" fill="#707070" />
<rect x="901.0" y="262.5" width="1.6" height="1.6" fill="#707070" />
<rect x="913.0" y="262.5" width="1.6" height="1.6" fill="#707070" />
<rect x="925.0" y="262.5" width="1.6" height="1.6" fill="#707070" />
<rect x="37.0" y="321.1" width="1.6" height="4.4" fill="#d0d0d0" />
<rect x="49.0" y="321.1" width="1.6" height="4.4" fill="#d0d0d0" />
<rect x="61.0" y="321.1" width="1.6" height="4.4" fill="#d0d0d0" />
<rect x="73.0" y="321.1" width="1.6" height="4.4" fill="#d0d0d0" />
<rect x="85.0" y="321.1" width="1.6" height="4.4" fill="#d0d0d0" />
<rect x="97.0" y="321.1" width="1.6" height="4.4" fill="#d0d0d0" />
<rect x="109.0" y="321.1" width="1.6" height="4.4" fill="#d0d0d0" />
<rect x="121.0" y="321.1" width="1.6" height="4.4" fill="#d0d0d0" />
<rect x="133.0" y="321.1" width="1.6" height="4.4" fill="#d0d0d0" />
<rect x="145.0" y="321.1" width="1.6" height="4.4" fill="#d0d0d0" />
<rect x="157.0" y="321.1" width="1.6" height="4.4" fill="#d0d0d0" />
<rect x="169.0" y="321.1" width="1.6" height="4.4" fill="#d0d0d0" />
<rect x="181.0" y="321.1" width="1.6" height="4.4" fill="#d0d0d0" />
<rect x="193.0" y="321.1" width="1.6" height="4.4" fill="#d0d0d0" />
<rect x="205.0" y="321.1" width="1.6" height="4.4" fill="#d0d0d0" />
<rect x="217.0" y="321.1" width="1.6" height="4.4" fill="#d0d0d0" />
<rect x="229.0" y="321.1" width="1.6" height="4.4" fill="#d0d0d0" />
<rect x="241.0" y="321.1" width="1.6" height="4.4" fill="#d0d0d0" />
<rect x="253.0" y="321.1" width="1.6" height="4.4" fill="#d0d0d0" />
<rect x="265.0" y="321.1" width="1.6" height="4.4" fill="#d0d0d0" />
<rect x="277.0" y="321.1" width="1.6" height="4.4" fill="#d0d0d0" />
<rect x="289.0" y="321.1" width="1.6" height="4.4" fill="#d0d0d0" />
<rect x="301.0" y="321.1" width="1.6" height="4.4" fill="#d0d0d0" />
<rect x="313.0" y="321.1" width="1.6" height="4.4" fill="#d0d0d0" />
<rect x="325.0" y="321.1" width="1.6" height="4.4" fill="#d0d0d0" />
<rect x="337.0" y="321.1" width="1.6" height="4.4" fill="#d0d0d0" />
<rect x="349.0" y="321.1" width="1.6" height="4.4" fill="#d0d0d0" />
<rect x="361.0" y="321.1" width="1.6" height="4.4" fill="#d0d0d0" />
<rect x="373.0" y="321.1" width="1.6" height="4.4" fill="#d0d0d0" />
<rect x="385.0" y="321.1" width="1.6" height="4.4" fill="#d0d0d0" />
<rect x="397.0" y="321.1" width="1.6" height="4.4" fill="#d0d0d0" />
<rect x="409.0" y="321.1" width="1.6" height="4.4" fill="#d0d0d0" />
<rect x="421.0" y="321.1" width="1.6" height="4.4" fill="#d0d0d0" />
<rect x="433.0" y="321.1" width="1.6" height="4.4" fill="#d0d0d0" />
<rect x="445.0" y="321.1" width="1.6" height="4.4" fill="#d0d0d0" />
<rect x="457.0" y="321.1" width="1.6" height="4.4" fill="#d0d0d0" />
<rect x="469.0" y="321.1" width="1.6" height="4.4" fill="#d0d0d0" />
<rect x="481.0" y="321.1" width="1.6" height="4.4" fill="#d0d0d0" />
<rect x="493.0" y="321.1" width="1.6" height="4.4" fill="#d0d0d0" />
<rect x="505.0" y="321.1" width="1.6" height="4.4" fill="#d0d0d0" />
<rect x="517.0" y="321.1" width="1.6" height="4.4" fill="#d0d0d0" />
<rect x="529.0" y="321.1" width="1.6" height="4.4" fill="#d0d0d0" />
<rect x="541.0" y="321.1" width="1.6" height="4.4" fill="#d0d0d0" />
<rect x="553.0" y="321.1" width="1.6" height="4.4" fill="#d0d0d0" />
<rect x="565.0" y="321.1" width="1.6" height="4.4" fill="#d0d0d0" />
<rect x="577.0" y="321.1" width="1.6" height="4.4" fill="#d0d0d0" />
<rect x="589.0" y="321.1" width="1.6" height="4.4" fill="#d0d0d0" />
<rect x="601.0" y="321.1" width="1.6" height="4.4" fill="#d0d0d0" />
<rect x="613.0" y="321.1" width="1.6" height="4.4" fill="#d0d0d0" />
<rect x="625.0" y="321.1" width="1.6" height="4.4" fill="#d0d0d0" />
<rect x="637.0" y="321.1" width="1.6" height="4.4" fill="#d0d0d0" />
<rect x="649.0" y="321.1" width="1.6" height="4.4" fill="#d0d0d0" />
<rect x="661.0" y="321.1" width="1.6" height="4.4" fill="#d0d0d0" />
<rect x="673.0" y="321.1" width="1.6" height="4.4" fill="#d0d0d0" />
<rect x="685.0" y="321.1" width="1.6" height="4.4" fill="#d0d0d0" />
<rect x="697.0" y="321.1" width="1.6" height="4.4" fill="#d0d0d0" />
<rect x="709.0" y="321.1" width="1.6" height="4.4" fill="#d0d0d0" />
<rect x="721.0" y="321.1" width="1.6" height="4.4" fill="#d0d0d0" />
<rect x="733.0" y="321.1" width="1.6" height="4.4" fill="#d0d0d0" />
<rect x="745.0" y="321.1" width="1.6" height="4.4" fill="#d0d0d0" />
<rect x="757.0" y="321.1" width="1.6" height="4.4" fill="#d0d0d0" />
<rect x="769.0" y="321.1" width="1.6" height="4.4" fill="#d0d0d0" />
<rect x="781.0" y="321.1" width="1.6" height="4.4" fill="#d0d0d0" />
<rect x="793.0" y="321.1" width="1.6" height="4.4" fill="#d0d0d0" />
<rect x="805.0" y="321.1" width="1.6" height="4.4" fill="#d0d0d0" />
<rect x="817.0" y="321.1" width="1.6" height="4.4" fill="#d0d0d0" />
<rect x="829.0" y="321.1" width="1.6" height="4.4" fill="#d0d0d0" />
<rect x="841.0" y="321.1" width="1.6" height="4.4" fill="#d0d0d0" />
<rect x="853.0" y="321.1" width="1.6" height="4.4" fill="#d0d0d0" />
<rect x="865.0" y="321.1" width="1.6" height="4.4" fill="#d0d0d0" />
<rect x="877.0" y="321.1" width="1.6" height="4.4" fill="#d0d0d0" />
<rect x="889.0" y="321.1" width="1.6" height="4.4" fill="#d0d0d0" />
<rect x="901.0" y="321.1" width="1.6" height="4.4" fill="#d0d0d0" />
<rect x="913.0" y="321.1" width="1.6" height="4.4" fill="#d0d0d0" />
<rect x="925.0" y="321.1" width="1.6" height="4.4" fill="#d0d0d0" />
<rect x="37.0" y="382.5" width="1.6" height="1.6" fill="#707070" />
<rect x="49.0" y="382.5" width="1.6" height="1.6" fill="#707070" />
<rect x="61.0" y="382.5" width="1.6" height="1.6" fill="#707070" />
<rect x="73.0" y="382.5" width="1.6" height="1.6" fill="#707070" />
<rect x="85.0" y="382.5" width="1.6" height="1.6" fill="#707070" />
<rect x="97.0" y="382.5" width="1.6" height="1.6" fill="#707070" />
<rect x="109.0" y="382.5" width="1.6" height="1.6" fill="#707070" />
<rect x="121.0" y="382.5" width="1.6" height="1.6" fill="#707070" />
<rect x="133.0" y="382.5" width="1.6" height="1.6" fill="#707070" />
<rect x="145.0" y="382.5" width="1.6" height="1.6" fill="#707070" />
<rect x="157.0" y="382.5" width="1.6" height="1.6" fill="#707070" />
<rect x="169.0" y="382.5" width="1.6" height="1.6" fill="#707070" />
<rect x="181.0" y="382.5" width="1.6" height="1.6" fill="#707070" />
<rect x="193.0" y="382.5" width="1.6" height="1.6" fill="#707070" />
<rect x="205.0" y="382.5" width="1.6" height="1.6" fill="#707070" />
<rect x="217.0" y="382.5" width="1.6" height="1.6" fill="#707070" />
<rect x="229.0" y="382.5" width="1.6" height="1.6" fill="#707070" />
<rect x="241.0" y="382.5" width="1.6" height="1.6" fill="#707070" />
<rect x="253.0" y="382.5" width="1.6" height="1.6" fill="#707070" />
<rect x="265.0" y="382.5" width="1.6" height="1.6" fill="#707070" />
<rect x="277.0" y="382.5" width="1.6" height="1.6" fill="#707070" />
<rect x="289.0" y="382.5" width="1.6" height="1.6" fill="#707070" />
<rect x="301.0" y="382.5" width="1.6" height="1.6" fill="#707070" />
<rect x="313.0" y="382.5" width="1.6" height="1.6" fill="#707070" />
<rect x="325.0" y="382.5" width="1.6" height="1.6" fill="#707070" />
<rect x="337.0" y="382.5" width="1.6" height="1.6" fill="#707070" />
<rect x="349.0" y="382.5" width="1.6" height="1.6" fill="#707070" />
<rect x="361.0" y="382.5" width="1.6" height="1.6" fill="#707070" />
<rect x="373.0" y="382.5" width="1.6" height="1.6" fill="#707070" />
<rect x="385.0" y="382.5" width="1.6" height="1.6" fill="#707070" />
<rect x="397.0" y="382.5" width="1.6" height="1.6" fill="#707070" />
<rect x="409.0" y="382.5" width="1.6" height="1.6" fill="#707070" />
<rect x="421.0" y="382.5" width="1.6" height="1.6" fill="#707070" />
<rect x="433.0" y="382.5" width="1.6" height="1.6" fill="#707070" />
<rect x="445.0" y="382.5" width="1.6" height="1.6" fill="#707070" />
<rect x="457.0" y="382.5" width="1.6" height="1.6" fill="#707070" />
<rect x="469.0" y="382.5" width="1.6" height="1.6" fill="#707070" />
<rect x="481.0" y="382.5" width="1.6" height="1.6" fill="#707070" />
<rect x="493.0" y="382.5" width="1.6" height="1.6" fill="#707070" />
<rect x="505.0" y="382.5" width="1.6" height="1.6" fill="#707070" />
<rect x="517.0" y="382.5" width="1.6" height="1.6" fill="#707070" />
<rect x="529.0" y="382.5" width="1.6" height="1.6" fill="#707070" />
<rect x="541.0" y="382.5" width="1.6" height="1.6" fill="#707070" />
<rect x="553.0" y="382.5" width="1.6" height="1.6" fill="#707070" />
<rect x="565.0" y="382.5" width="1.6" height="1.6" fill="#707070" />
<rect x="577.0" y="382.5" width="1.6" height="1.6" fill="#707070" />
<rect x="589.0" y="382.5" width="1.6" height="1.6" fill="#707070" />
<rect x="601.0" y="382.5" width="1.6" height="1.6" fill="#707070" />
<rect x="613.0" y="382.5" width="1.6" height="1.6" fill="#707070" />
<rect x="625.0" y="382.5" width="1.6" height="1.6" fill="#707070" />
<rect x="637.0" y="382.5" width="1.6" height="1.6" fill="#707070" />
<rect x="649.0" y="382.5" width="1.6" height="1.6" fill="#707070" />
<rect x="661.0" y="382.5" width="1.6" height="1.6" fill="#707070" />
<rect x="673.0" y="382.5" width="1.6" height="1.6" fill="#707070" />
<rect x="685.0" y="382.5" width="1.6" height="1.6" fill="#707070" />
<rect x="697.0" y="382.5" width="1.6" height="1.6" fill="#707070" />
<rect x="709.0" y="382.5" width="1.6" height="1.6" fill="#707070" />
<rect x="721.0" y="382.5" width="1.6" height="1.6" fill="#707070" />
<rect x="733.0" y="382.5" width="1.6" height="1.6" fill="#707070" />
<rect x="745.0" y="382.5" width="1.6" height="1.6" fill="#707070" />
<rect x="757.0" y="382.5" width="1.6" height="1.6" fill="#707070" />
<rect x="769.0" y="382.5" width="1.6" height="1.6" fill="#707070" />
<rect x="781.0" y="382.5" width="1.6" height="1.6" fill="#707070" />
<rect x="793.0" y="382.5" width="1.6" height="1.6" fill="#707070" />
<rect x="805.0" y="382.5" width="1.6" height="1.6" fill="#707070" />
<rect x="817.0" y="382.5" width="1.6" height="1.6" fill="#707070" />
<rect x="829.0" y="382.5" width="1.6" height="1.6" fill="#707070" />
<rect x="841.0" y="382.5" width="1.6" height="1.6" fill="#707070" />
<rect x="853.0" y="382.5" width="1.6" height="1.6" fill="#707070" />
<rect x="865.0" y="382.5" width="1.6" height="1.6" fill="#707070" />
<rect x="877.0" y="382.5" width="1.6" height="1.6" fill="#707070" />
<rect x="889.0" y="382.5" width="1.6" height="1.6" fill="#707070" />
<rect x="901.0" y="382.5" width="1.6" height="1.6" fill="#707070" />
<rect x="913.0" y="382.5" width="1.6" height="1.6" fill="#707070" />
<rect x="925.0" y="382.5" width="1.6" height="1.6" fill="#707070" />
<rect x="37.0" y="442.5" width="1.6" height="1.6" fill="#707070" />
<rect x="49.0" y="442.5" width="1.6" height="1.6" fill="#707070" />
<rect x="61.0" y="442.5" width="1.6" height="1.6" fill="#707070" />
<rect x="73.0" y="442.5" width="1.6" height="1.6" fill="#707070" />
<rect x="85.0" y="442.5" width="1.6" height="1.6" fill="#707070" />
<rect x="97.0" y="442.5" width="1.6" height="1.6" fill="#707070" />
<rect x="109.0" y="442.5" width="1.6" height="1.6" fill="#707070" />
<rect x="121.0" y="442.5" width="1.6" height="1.6" fill="#707070" />
<rect x="133.0" y="442.5" width="1.6" height="1.6" fill="#707070" />
<rect x="145.0" y="442.5" width="1.6" height="1.6" fill="#707070" />
<rect x="157.0" y="442.5" width="1.6" height="1.6" fill="#707070" />
<rect x="169.0" y="442.5" width="1.6" height="1.6" fill="#707070" />
<rect x="181.0" y="442.5" width="1.6" height="1.6" fill="#707070" />
<rect x="193.0" y="442.5" width="1.6" height="1.6" fill="#707070" />
<rect x="205.0" y="442.5" width="1.6" height="1.6" fill="#707070" />
<rect x="217.0" y="442.5" width="1.6" height="1.6" fill="#707070" />
<rect x="229.0" y="442.5" width="1.6" height="1.6" fill="#707070" />
<rect x="241.0" y="442.5" width="1.6" height="1.6" fill="#707070" />
<rect x="253.0" y="442.5" width="1.6" height="1.6" fill="#707070" />
<rect x="265.0" y="442.5" width="1.6" height="1.6" fill="#707070" />
<rect x="277.0" y="442.5" width="1.6" height="1.6" fill="#707070" />
<rect x="289.0" y="442.5" width="1.6" height="1.6" fill="#707070" />
<rect x="301.0" y="442.5" width="1.6" height="1.6" fill="#707070" />
<rect x="313.0" y="442.5" width="1.6" height="1.6" fill="#707070" />
<rect x="325.0" y="442.5" width="1.6" height="1.6" fill="#707070" />
<rect x="337.0" y="442.5" width="1.6" height="1.6" fill="#707070" />
<rect x="349.0" y="442.5" width="1.6" height="1.6" fill="#707070" />
<rect x="361.0" y="442.5" width="1.6" height="1.6" fill="#707070" />
<rect x="373.0" y="442.5" width="1.6" height="1.6" fill="#707070" />
<rect x="385.0" y="442.5" width="1.6" height="1.6" fill="#707070" />
<rect x="397.0" y="442.5" width="1.6" height="1.6" fill="#707070" />
<rect x="409.0" y="442.5" width="1.6" height="1.6" fill="#707070" />
<rect x="421.0" y="442.5" width="1.6" height="1.6" fill="#707070" />
<rect x="433.0" y="442.5" width="1.6" height="1.6" fill="#707070" />
<rect x="445.0" y="442.5" width="1.6" height="1.6" fill="#707070" />
<rect x="457.0" y="442.5" width="1.6" height="1.6" fill="#707070" />
<rect x="469.0" y="442.5" width="1.6" height="1.6" fill="#707070" />
<rect x="481.0" y="442.5" width="1.6" height="1.6" fill="#707070" />
<rect x="493.0" y="442.5" width="1.6" height="1.6" fill="#707070" />
<rect x="505.0" y="442.5" width="1.6" height="1.6" fill="#707070" />
<rect x="517.0" y="442.5" width="1.6" height="1.6" fill="#707070" />
<rect x="529.0" y="442.5" width="1.6" height="1.6" fill="#707070" />
<rect x="541.0" y="442.5" width="1.6" height="1.6" fill="#707070" />
<rect x="553.0" y="442.5" width="1.6" height="1.6" fill="#707070" />
<rect x="565.0" y="442.5" width="1.6" height="1.6" fill="#707070" />
<rect x="577.0" y="442.5" width="1.6" height="1.6" fill="#707070" />
<rect x="589.0" y="442.5" width="1.6" height="1.6" fill="#707070" />
<rect x="601.0" y="442.5" width="1.6" height="1.6" fill="#707070" />
<rect x="613.0" y="442.5" width="1.6" height="1.6" fill="#707070" />
<rect x="625.0" y="442.5" width="1.6" height="1.6" fill="#707070" />
<rect x="637.0" y="442.5" width="1.6" height="1.6" fill="#707070" />
<rect x="649.0" y="442.5" width="1.6" height="1.6" fill="#707070" />
<rect x="661.0" y="442.5" width="1.6" height="1.6" fill="#707070" />
<rect x="673.0" y="442.5" width="1.6" height="1.6" fill="#707070" />
<rect x="685.0" y="442.5" width="1.6" height="1.6" fill="#707070" />
<rect x="697.0" y="442.5" width="1.6" height="1.6" fill="#707070" />
<rect x="709.0" y="442.5" width="1.6" height="1.6" fill="#707070" />
<rect x="721.0" y="442.5" width="1.6" height="1.6" fill="#707070" />
<rect x="733.0" y="442.5" width="1.6" height="1.6" fill="#707070" />
<rect x="745.0" y="442.5" width="1.6" height="1.6" fill="#707070" />
<rect x="757.0" y="442.5" width="1.6" height="1.6" fill="#707070" />
<rect x="769.0" y="442.5" width="1.6" height="1.6" fill="#707070" />
<rect x="781.0" y="442.5" width="1.6" height="1.6" fill="#707070" />
<rect x="793.0" y="442.5" width="1.6" height="1.6" fill="#707070" />
<rect x="805.0" y="442.5" width="1.6" height="1.6" fill="#707070" />
<rect x="817.0" y="442.5" width="1.6" height="1.6" fill="#707070" />
<rect x="829.0" y="442.5" width="1.6" height="1.6" fill="#707070" />
<rect x="841.0" y="442.5" width="1.6" height="1.6" fill="#707070" />
<rect x="853.0" y="442.5" width="1.6" height="1.6" fill="#707070" />
<rect x="865.0" y="442.5" width="1.6" height="1.6" fill="#707070" />
<rect x="877.0" y="442.5" width="1.6" height="1.6" fill="#707070" />
<rect x="889.0" y="442.5" width="1.6" height="1.6" fill="#707070" />
<rect x="901.0" y="442.5" width="1.6" height="1.6" fill="#707070" />
<rect x="913.0" y="442.5" width="1.6" height="1.6" fill="#707070" />
<rect x="925.0" y="442.5" width="1.6" height="1.6" fill="#707070" />
<rect x="37.0" y="502.5" width="1.6" height="1.6" fill="#707070" />
<rect x="49.0" y="502.5" width="1.6" height="1.6" fill="#707070" />
<rect x="61.0" y="502.5" width="1.6" height="1.6" fill="#707070" />
<rect x="73.0" y="502.5" width="1.6" height="1.6" fill="#707070" />
<rect x="85.0" y="502.5" width="1.6" height="1.6" fill="#707070" />
<rect x="97.0" y="502.5" width="1.6" height="1.6" fill="#707070" />
<rect x="109.0" y="502.5" width="1.6" height="1.6" fill="#707070" />
<rect x="121.0" y="502.5" width="1.6" height="1.6" fill="#707070" />
<rect x="133.0" y="502.5" width="1.6" height="1.6" fill="#707070" />
<rect x="145.0" y="502.5" width="1.6" height="1.6" fill="#707070" />
<rect x="157.0" y="502.5" width="1.6" height="1.6" fill="#707070" />
<rect x="169.0" y="502.5" width="1.6" height="1.6" fill="#707070" />
<rect x="181.0" y="502.5" width="1.6" height="1.6" fill="#707070" />
<rect x="193.0" y="502.5" width="1.6" height="1.6" fill="#707070" />
<rect x="205.0" y="502.5" width="1.6" height="1.6" fill="#707070" />
<rect x="217.0" y="502.5" width="1.6" height="1.6" fill="#707070" />
<rect x="229.0" y="502.5" width="1.6" height="1.6" fill="#707070" />
<rect x="241.0" y="502.5" width="1.6" height="1.6" fill="#707070" />
<rect x="253.0" y="502.5" width="1.6" height="1.6" fill="#707070" />
<rect x="265.0" y="502.5" width="1.6" height="1.6" fill="#707070" />
<rect x="277.0" y="502.5" width="1.6" height="1.6" fill="#707070" />
<rect x="289.0" y="502.5" width="1.6" height="1.6" fill="#707070" />
<rect x="301.0" y="502.5" width="1.6" height="1.6" fill="#707070" />
<rect x="313.0" y="502.5" width="1.6" height="1.6" fill="#707070" />
<rect x="325.0" y="502.5" width="1.6" height="1.6" fill="#707070" />
<rect x="337.0" y="502.5" width="1.6" height="1.6" fill="#707070" />
<rect x="349.0" y="502.5" width="1.6" height="1.6" fill="#707070" />
<rect x="361.0" y="502.5" width="1.6" height="1.6" fill="#707070" />
<rect x="373.0" y="502.5" width="1.6" height="1.6" fill="#707070" />
<rect x="385.0" y="502.5" width="1.6" height="1.6" fill="#707070" />
<rect x="397.0" y="502.5" width="1.6" height="1.6" fill="#707070" />
<rect x="409.0" y="502.5" width="1.6" height="1.6" fill="#707070" />
<rect x="421.0" y="502.5" width="1.6" height="1.6" fill="#707070" />
<rect x="433.0" y="502.5" width="1.6" height="1.6" fill="#707070" />
<rect x="445.0" y="502.5" width="1.6" height="1.6" fill="#707070" />
<rect x="457.0" y="502.5" width="1.6" height="1.6" fill="#707070" />
<rect x="469.0" y="502.5" width="1.6" height="1.6" fill="#707070" />
<rect x="481.0" y="502.5" width="1.6" height="1.6" fill="#707070" />
<rect x="493.0" y="502.5" width="1.6" height="1.6" fill="#707070" />
<rect x="505.0" y="502.5" width="1.6" height="1.6" fill="#707070" />
<rect x="517.0" y="502.5" width="1.6" height="1.6" fill="#707070" />
<rect x="529.0" y="502.5" width="1.6" height="1.6" fill="#707070" />
<rect x="541.0" y="502.5" width="1.6" height="1.6" fill="#707070" />
<rect x="553.0" y="502.5" width="1.6" height="1.6" fill="#707070" />
<rect x="565.0" y="502.5" width="1.6" height="1.6" fill="#707070" />
<rect x="577.0" y="502.5" width="1.6" height="1.6" fill="#707070" />
<rect x="589.0" y="502.5" width="1.6" height="1.6" fill="#707070" />
<rect x="601.0" y="502.5" width="1.6" height="1.6" fill="#707070" />
<rect x="613.0" y="502.5" width="1.6" height="1.6" fill="#707070" />
<rect x="625.0" y="502.5" width="1.6" height="1.6" fill="#707070" />
<rect x="637.0" y="502.5" width="1.6" height="1.6" fill="#707070" />
<rect x="649.0" y="502.5" width="1.6" height="1.6" fill="#707070" />
<rect x="661.0" y="502.5" width="1.6" height="1.6" fill="#707070" />
<rect x="673.0" y="502.5" width="1.6" height="1.6" fill="#707070" />
<rect x="685.0" y="502.5" width="1.6" height="1.6" fill="#707070" />
<rect x="697.0" y="502.5" width="1.6" height="1.6" fill="#707070" />
<rect x="709.0" y="502.5" width="1.6" height="1.6" fill="#707070" />
<rect x="721.0" y="502.5" width="1.6" height="1.6" fill="#707070" />
<rect x="733.0" y="502.5" width="1.6" height="1.6" fill="#707070" />
<rect x="745.0" y="502.5" width="1.6" height="1.6" fill="#707070" />
<rect x="757.0" y="502.5" width="1.6" height="1.6" fill="#707070" />
<rect x="769.0" y="502.5" width="1.6" height="1.6" fill="#707070" />
<rect x="781.0" y="502.5" width="1.6" height="1.6" fill="#707070" />
<rect x="793.0" y="502.5" width="1.6" height="1.6" fill="#707070" />
<rect x="805.0" y="502.5" width="1.6" height="1.6" fill="#707070" />
<rect x="817.0" y="502.5" width="1.6" height="1.6" fill="#707070" />
<rect x="829.0" y="502.5" width="1.6" height="1.6" fill="#707070" />
<rect x="841.0" y="502.5" width="1.6" height="1.6" fill="#707070" />
<rect x="853.0" y="502.5" width="1.6" height="1.6" fill="#707070" />
<rect x="865.0" y="502.5" width="1.6" height="1.6" fill="#707070" />
<rect x="877.0" y="502.5" width="1.6" height="1.6" fill="#707070" />
<rect x="889.0" y="502.5" width="1.6" height="1.6" fill="#707070" />
<rect x="901.0" y="502.5" width="1.6" height="1.6" fill="#707070" />
<rect x="913.0" y="502.5" width="1.6" height="1.6" fill="#707070" />
<rect x="925.0" y="502.5" width="1.6" height="1.6" fill="#707070" />
<rect x="37.0" y="562.5" width="1.6" height="1.6" fill="#707070" />
<rect x="49.0" y="562.5" width="1.6" height="1.6" fill="#707070" />
<rect x="61.0" y="562.5" width="1.6" height="1.6" fill="#707070" />
<rect x="73.0" y="562.5" width="1.6" height="1.6" fill="#707070" />
<rect x="85.0" y="562.5" width="1.6" height="1.6" fill="#707070" />
<rect x="97.0" y="562.5" width="1.6" height="1.6" fill="#707070" />
<rect x="109.0" y="562.5" width="1.6" height="1.6" fill="#707070" />
<rect x="121.0" y="562.5" width="1.6" height="1.6" fill="#707070" />
<rect x="133.0" y="562.5" width="1.6" height="1.6" fill="#707070" />
<rect x="145.0" y="562.5" width="1.6" height="1.6" fill="#707070" />
<rect x="157.0" y="562.5" width="1.6" height="1.6" fill="#707070" />
<rect x="169.0" y="562.5" width="1.6" height="1.6" fill="#707070" />
<rect x="181.0" y="562.5" width="1.6" height="1.6" fill="#707070" />
<rect x="193.0" y="562.5" width="1.6" height="1.6" fill="#707070" />
<rect x="205.0" y="562.5" width="1.6" height="1.6" fill="#707070" />
<rect x="217.0" y="562.5" width="1.6" height="1.6" fill="#707070" />
<rect x="229.0" y="562.5" width="1.6" height="1.6" fill="#707070" />
<rect x="241.0" y="562.5" width="1.6" height="1.6" fill="#707070" />
<rect x="253.0" y="562.5" width="1.6" height="1.6" fill="#707070" />
<rect x="265.0" y="562.5" width="1.6" height="1.6" fill="#707070" />
<rect x="277.0" y="562.5" width="1.6" height="1.6" fill="#707070" />
<rect x="289.0" y="562.5" width="1.6" height="1.6" fill="#707070" />
<rect x="301.0" y="562.5" width="1.6" height="1.6" fill="#707070" />
<rect x="313.0" y="562.5" width="1.6" height="1.6" fill="#707070" />
<rect x="325.0" y="562.5" width="1.6" height="1.6" fill="#707070" />
<rect x="337.0" y="562.5" width="1.6" height="1.6" fill="#707070" />
<rect x="349.0" y="562.5" width="1.6" height="1.6" fill="#707070" />
<rect x="361.0" y="562.5" width="1.6" height="1.6" fill="#707070" />
<rect x="373.0" y="562.5" width="1.6" height="1.6" fill="#707070" />
<rect x="385.0" y="562.5" width="1.6" height="1.6" fill="#707070" />
<rect x="397.0" y="562.5" width="1.6" height="1.6" fill="#707070" />
<rect x="409.0" y="562.5" width="1.6" height="1.6" fill="#707070" />
<rect x="421.0" y="562.5" width="1.6" height="1.6" fill="#707070" />
<rect x="433.0" y="562.5" width="1.6" height="1.6" fill="#707070" />
<rect x="445.0" y="562.5" width="1.6" height="1.6" fill="#707070" />
<rect x="457.0" y="562.5" width="1.6" height="1.6" fill="#707070" />
<rect x="469.0" y="562.5" width="1.6" height="1.6" fill="#707070" />
<rect x="481.0" y="562.5" width="1.6" height="1.6" fill="#707070" />
<rect x="493.0" y="562.5" width="1.6" height="1.6" fill="#707070" />
<rect x="505.0" y="562.5" width="1.6" height="1.6" fill="#707070" />
<rect x="517.0" y="562.5" width="1.6" height="1.6" fill="#707070" />
<rect x="529.0" y="562.5" width="1.6" height="1.6" fill="#707070" />
<rect x="541.0" y="562.5" width="1.6" height="1.6" fill="#707070" />
<rect x="553.0" y="562.5" width="1.6" height="1.6" fill="#707070" />
<rect x="565.0" y="562.5" width="1.6" height="1.6" fill="#707070" />
<rect x="577.0" y="562.5" width="1.6" height="1.6" fill="#707070" />
<rect x="589.0" y="562.5" width="1.6" height="1.6" fill="#707070" />
<rect x="601.0" y="562.5" width="1.6" height="1.6" fill="#707070" />
<rect x="613.0" y="562.5" width="1.6" height="1.6" fill="#707070" />
<rect x="625.0" y="562.5" width="1.6" height="1.6" fill="#707070" />
<rect x="637.0" y="562.5" width="1.6" height="1.6" fill="#707070" />
<rect x="649.0" y="562.5" width="1.6" height="1.6" fill="#707070" />
<rect x="661.0" y="562.5" width="1.6" height="1.6" fill="#707070" />
<rect x="673.0" y="562.5" width="1.6" height="1.6" fill="#707070" />
<rect x="685.0" y="562.5" width="1.6" height="1.6" fill="#707070" />
<rect x="697.0" y="562.5" width="1.6" height="1.6" fill="#707070" />
<rect x="709.0" y="562.5" width="1.6" height="1.6" fill="#707070" />
<rect x="721.0" y="562.5" width="1.6" height="1.6" fill="#707070" />
<rect x="733.0" y="562.5" width="1.6" height="1.6" fill="#707070" />
<rect x="745.0" y="562.5" width="1.6" height="1.6" fill="#707070" />
<rect x="757.0" y="562.5" width="1.6" height="1.6" fill="#707070" />
<rect x="769.0" y="562.5" width="1.6" height="1.6" fill="#707070" />
<rect x="781.0" y="562.5" width="1.6" height="1.6" fill="#707070" />
<rect x="793.0" y="562.5" width="1.6" height="1.6" fill="#707070" />
<rect x="805.0" y="562.5" width="1.6" height="1.6" fill="#707070" />
<rect x="817.0" y="562.5" width="1.6" height="1.6" fill="#707070" />
<rect x="829.0" y="562.5" width="1.6" height="1.6" fill="#707070" />
<rect x="841.0" y="562.5" width="1.6" height="1.6" fill="#707070" />
<rect x="853.0" y="562.5" width="1.6" height="1.6" fill="#707070" />
<rect x="865.0" y="562.5" width="1.6" height="1.6" fill="#707070" />
<rect x="877.0" y="562.5" width="1.6" height="1.6" fill="#707070" />
<rect x="889.0" y="562.5" width="1.6" height="1.6" fill="#707070" />
<rect x="901.0" y="562.5" width="1.6" height="1.6" fill="#707070" />
<rect x="913.0" y="562.5" width="1.6" height="1.6" fill="#707070" />
<rect x="925.0" y="562.5" width="1.6" height="1.6" fill="#707070" />
<rect x="36.95" y="25" width="1.7" height="2.5" fill="#dcdcdc" />
<rect x="36.95" y="617.8" width="1.7" height="2.5" fill="#dcdcdc" />
<rect x="48.95" y="25" width="1.7" height="2.5" fill="#dcdcdc" />
<rect x="48.95" y="617.8" width="1.7" height="2.5" fill="#dcdcdc" />
<rect x="60.95" y="25" width="1.7" height="5.7" fill="#dcdcdc" />
<rect x="60.95" y="614.1" width="1.7" height="6.2" fill="#dcdcdc" />
<rect x="72.95" y="25" width="1.7" height="2.5" fill="#dcdcdc" />
<rect x="72.95" y="617.8" width="1.7" height="2.5" fill="#dcdcdc" />
<rect x="84.95" y="25" width="1.7" height="2.5" fill="#dcdcdc" />
<rect x="84.95" y="617.8" width="1.7" height="2.5" fill="#dcdcdc" />
<rect x="96.95" y="25" width="1.7" height="2.5" fill="#dcdcdc" />
<rect x="96.95" y="617.8" width="1.7" height="2.5" fill="#dcdcdc" />
<rect x="108.95" y="25" width="1.7" height="2.5" fill="#dcdcdc" />
<rect x="108.95" y="617.8" width="1.7" height="2.5" fill="#dcdcdc" />
<rect x="120.95" y="25" width="1.7" height="5.7" fill="#dcdcdc" />
<rect x="120.95" y="614.1" width="1.7" height="6.2" fill="#dcdcdc" />
<rect x="132.95" y="25" width="1.7" height="2.5" fill="#dcdcdc" />
<rect x="132.95" y="617.8" width="1.7" height="2.5" fill="#dcdcdc" />
<rect x="144.95" y="25" width="1.7" height="2.5" fill="#dcdcdc" />
<rect x="144.95" y="617.8" width="1.7" height="2.5" fill="#dcdcdc" />
<rect x="156.95" y="25" width="1.7" height="2.5" fill="#dcdcdc" />
<rect x="156.95" y="617.8" width="1.7" height="2.5" fill="#dcdcdc" />
<rect x="168.95" y="25" width="1.7" height="2.5" fill="#dcdcdc" />
<rect x="168.95" y="617.8" width="1.7" height="2.5" fill="#dcdcdc" />
<rect x="180.95" y="25" width="1.7" height="5.7" fill="#dcdcdc" />
<rect x="180.95" y="614.1" width="1.7" height="6.2" fill="#dcdcdc" />
<rect x="192.95" y="25" width="1.7" height="2.5" fill="#dcdcdc" />
<rect x="192.95" y="617.8" width="1.7" height="2.5" fill="#dcdcdc" />
<rect x="204.95" y="25" width="1.7" height="2.5" fill="#dcdcdc" />
<rect x="204.95" y="617.8" width="1.7" height="2.5" fill="#dcdcdc" />
<rect x="216.95" y="25" width="1.7" height="2.5" fill="#dcdcdc" />
<rect x="216.95" y="617.8" width="1.7" height="2.5" fill="#dcdcdc" />
<rect x="228.95" y="25" width="1.7" height="2.5" fill="#dcdcdc" />
<rect x="228.95" y="617.8" width="1.7" height="2.5" fill="#dcdcdc" />
<rect x="240.95" y="25" width="1.7" height="5.7" fill="#dcdcdc" />
<rect x="240.95" y="614.1" width="1.7" height="6.2" fill="#dcdcdc" />
<rect x="252.95" y="25" width="1.7" height="2.5" fill="#dcdcdc" />
<rect x="252.95" y="617.8" width="1.7" height="2.5" fill="#dcdcdc" />
<rect x="264.95" y="25" width="1.7" height="2.5" fill="#dcdcdc" />
<rect x="264.95" y="617.8" width="1.7" height="2.5" fill="#dcdcdc" />
<rect x="276.95" y="25" width="1.7" height="2.5" fill="#dcdcdc" />
<rect x="276.95" y="617.8" width="1.7" height="2.5" fill="#dcdcdc" />
<rect x="288.95" y="25" width="1.7" height="2.5" fill="#dcdcdc" />
<rect x="288.95" y="617.8" width="1.7" height="2.5" fill="#dcdcdc" />
<rect x="300.95" y="25" width="1.7" height="5.7" fill="#dcdcdc" />
<rect x="300.95" y="614.1" width="1.7" height="6.2" fill="#dcdcdc" />
<rect x="312.95" y="25" width="1.7" height="2.5" fill="#dcdcdc" />
<rect x="312.95" y="617.8" width="1.7" height="2.5" fill="#dcdcdc" />
<rect x="324.95" y="25" width="1.7" height="2.5" fill="#dcdcdc" />
<rect x="324.95" y="617.8" width="1.7" height="2.5" fill="#dcdcdc" />
<rect x="336.95" y="25" width="1.7" height="2.5" fill="#dcdcdc" />
<rect x="336.95" y="617.8" width="1.7" height="2.5" fill="#dcdcdc" />
<rect x="348.95" y="25" width="1.7" height="2.5" fill="#dcdcdc" />
<rect x="348.95" y="617.8" width="1.7" height="2.5" fill="#dcdcdc" />
<rect x="360.95" y="25" width="1.7" height="5.7" fill="#dcdcdc" />
<rect x="360.95" y="614.1" width="1.7" height="6.2" fill="#dcdcdc" />
<rect x="372.95" y="25" width="1.7" height="2.5" fill="#dcdcdc" />
<rect x="372.95" y="617.8" width="1.7" height="2.5" fill="#dcdcdc" />
<rect x="384.95" y="25" width="1.7" height="2.5" fill="#dcdcdc" />
<rect x="384.95" y="617.8" width="1.7" height="2.5" fill="#dcdcdc" />
<rect x="396.95" y="25" width="1.7" height="2.5" fill="#dcdcdc" />
<rect x="396.95" y="617.8" width="1.7" height="2.5" fill="#dcdcdc" />
<rect x="408.95" y="25" width="1.7" height="2.5" fill="#dcdcdc" />
<rect x="408.95" y="617.8" width="1.7" height="2.5" fill="#dcdcdc" />
<rect x="420.95" y="25" width="1.7" height="5.7" fill="#dcdcdc" />
<rect x="420.95" y="614.1" width="1.7" height="6.2" fill="#dcdcdc" />
<rect x="432.95" y="25" width="1.7" height="2.5" fill="#dcdcdc" />
<rect x="432.95" y="617.8" width="1.7" height="2.5" fill="#dcdcdc" />
<rect x="444.95" y="25" width="1.7" height="2.5" fill="#dcdcdc" />
<rect x="444.95" y="617.8" width="1.7" height="2.5" fill="#dcdcdc" />
<rect x="456.95" y="25" width="1.7" height="2.5" fill="#dcdcdc" />
<rect x="456.95" y="617.8" width="1.7" height="2.5" fill="#dcdcdc" />
<rect x="468.95" y="25" width="1.7" height="2.5" fill="#dcdcdc" />
<rect x="468.95" y="617.8" width="1.7" height="2.5" fill="#dcdcdc" />
<rect x="480.95" y="25" width="1.7" height="5.7" fill="#dcdcdc" />
<rect x="480.95" y="614.1" width="1.7" height="6.2" fill="#dcdcdc" />
<rect x="492.95" y="25" width="1.7" height="2.5" fill="#dcdcdc" />
<rect x="492.95" y="617.8" width="1.7" height="2.5" fill="#dcdcdc" />
<rect x="504.95" y="25" width="1.7" height="2.5" fill="#dcdcdc" />
<rect x="504.95" y="617.8" width="1.7" height="2.5" fill="#dcdcdc" />
<rect x="516.95" y="25" width="1.7" height="2.5" fill="#dcdcdc" />
<rect x="516.95" y="617.8" width="1.7" height="2.5" fill="#dcdcdc" />
<rect x="528.95" y="25" width="1.7" height="2.5" fill="#dcdcdc" />
<rect x="528.95" y="617.8" width="1.7" height="2.5" fill="#dcdcdc" />
<rect x="540.95" y="25" width="1.7" height="5.7" fill="#dcdcdc" />
<rect x="540.95" y="614.1" width="1.7" height="6.2" fill="#dcdcdc" />
<rect x="552.95" y="25" width="1.7" height="2.5" fill="#dcdcdc" />
<rect x="552.95" y="617.8" width="1.7" height="2.5" fill="#dcdcdc" />
<rect x="564.95" y="25" width="1.7" height="2.5" fill="#dcdcdc" />
<rect x="564.95" y="617.8" width="1.7" height="2.5" fill="#dcdcdc" />
<rect x="576.95" y="25" width="1.7" height="2.5" fill="#dcdcdc" />
<rect x="576.95" y="617.8" width="1.7" height="2.5" fill="#dcdcdc" />
<rect x="588.95" y="25" width="1.7" height="2.5" fill="#dcdcdc" />
<rect x="588.95" y="617.8" width="1.7" height="2.5" fill="#dcdcdc" />
<rect x="600.95" y="25" width="1.7" height="5.7" fill="#dcdcdc" />
<rect x="600.95" y="614.1" width="1.7" height="6.2" fill="#dcdcdc" />
<rect x="612.95" y="25" width="1.7" height="2.5" fill="#dcdcdc" />
<rect x="612.95" y="617.8" width="1.7" height="2.5" fill="#dcdcdc" />
<rect x="624.95" y="25" width="1.7" height="2.5" fill="#dcdcdc" />
<rect x="624.95" y="617.8" width="1.7" height="2.5" fill="#dcdcdc" />
<rect x="636.95" y="25" width="1.7" height="2.5" fill="#dcdcdc" />
<rect x="636.95" y="617.8" width="1.7" height="2.5" fill="#dcdcdc" />
<rect x="648.95" y="25" width="1.7" height="2.5" fill="#dcdcdc" />
<rect x="648.95" y="617.8" width="1.7" height="2.5" fill="#dcdcdc" />
<rect x="660.95" y="25" width="1.7" height="5.7" fill="#dcdcdc" />
<rect x="660.95" y="614.1" width="1.7" height="6.2" fill="#dcdcdc" />
<rect x="672.95" y="25" width="1.7" height="2.5" fill="#dcdcdc" />
<rect x="672.95" y="617.8" width="1.7" height="2.5" fill="#dcdcdc" />
<rect x="684.95" y="25" width="1.7" height="2.5" fill="#dcdcdc" />
<rect x="684.95" y="617.8" width="1.7" height="2.5" fill="#dcdcdc" />
<rect x="696.95" y="25" width="1.7" height="2.5" fill="#dcdcdc" />
<rect x="696.95" y="617.8" width="1.7" height="2.5" fill="#dcdcdc" />
<rect x="708.95" y="25" width="1.7" height="2.5" fill="#dcdcdc" />
<rect x="708.95" y="617.8" width="1.7" height="2.5" fill="#dcdcdc" />
<rect x="720.95" y="25" width="1.7" height="5.7" fill="#dcdcdc" />
<rect x="720.95" y="614.1" width="1.7" height="6.2" fill="#dcdcdc" />
<rect x="732.95" y="25" width="1.7" height="2.5" fill="#dcdcdc" />
<rect x="732.95" y="617.8" width="1.7" height="2.5" fill="#dcdcdc" />
<rect x="744.95" y="25" width="1.7" height="2.5" fill="#dcdcdc" />
<rect x="744.95" y="617.8" width="1.7" height="2.5" fill="#dcdcdc" />
<rect x="756.95" y="25" width="1.7" height="2.5" fill="#dcdcdc" />
<rect x="756.95" y="617.8" width="1.7" height="2.5" fill="#dcdcdc" />
<rect x="768.95" y="25" width="1.7" height="2.5" fill="#dcdcdc" />
<rect x="768.95" y="617.8" width="1.7" height="2.5" fill="#dcdcdc" />
<rect x="780.95" y="25" width="1.7" height="5.7" fill="#dcdcdc" />
<rect x="780.95" y="614.1" width="1.7" height="6.2" fill="#dcdcdc" />
<rect x="792.95" y="25" width="1.7" height="2.5" fill="#dcdcdc" />
<rect x="792.95" y="617.8" width="1.7" height="2.5" fill="#dcdcdc" />
<rect x="804.95" y="25" width="1.7" height="2.5" fill="#dcdcdc" />
<rect x="804.95" y="617.8" width="1.7" height="2.5" fill="#dcdcdc" />
<rect x="816.95" y="25" width="1.7" height="2.5" fill="#dcdcdc" />
<rect x="816.95" y="617.8" width="1.7" height="2.5" fill="#dcdcdc" />
<rect x="828.95" y="25" width="1.7" height="2.5" fill="#dcdcdc" />
<rect x="828.95" y="617.8" width="1.7" height="2.5" fill="#dcdcdc" />
<rect x="840.95" y="25" width="1.7" height="5.7" fill="#dcdcdc" />
<rect x="840.95" y="614.1" width="1.7" height="6.2" fill="#dcdcdc" />
<rect x="852.95" y="25" width="1.7" height="2.5" fill="#dcdcdc" />
<rect x="852.95" y="617.8" width="1.7" height="2.5" fill="#dcdcdc" />
<rect x="864.95" y="25" width="1.7" height="2.5" fill="#dcdcdc" />
<rect x="864.95" y="617.8" width="1.7" height="2.5" fill="#dcdcdc" />
<rect x="876.95" y="25" width="1.7" height="2.5" fill="#dcdcdc" />
<rect x="876.95" y="617.8" width="1.7" height="2.5" fill="#dcdcdc" />
<rect x="888.95" y="25" width="1.7" height="2.5" fill="#dcdcdc" />
<rect x="888.95" y="617.8" width="1.7" height="2.5" fill="#dcdcdc" />
<rect x="900.95" y="25" width="1.7" height="5.7" fill="#dcdcdc" />
<rect x="900.95" y="614.1" width="1.7" height="6.2" fill="#dcdcdc" />
<rect x="912.95" y="25" width="1.7" height="2.5" fill="#dcdcdc" />
<rect x="912.95" y="617.8" width="1.7" height="2.5" fill="#dcdcdc" />
<rect x="924.95" y="25" width="1.7" height="2.5" fill="#dcdcdc" />
<rect x="924.95" y="617.8" width="1.7" height="2.5" fill="#dcdcdc" />
<rect x="26" y="34.55" width="3.8" height="1.5" fill="#dcdcdc" />
<rect x="930.2" y="34.55" width="3.8" height="1.5" fill="#dcdcdc" />
<rect x="26" y="46.55" width="3.8" height="1.5" fill="#dcdcdc" />
<rect x="930.2" y="46.55" width="3.8" height="1.5" fill="#dcdcdc" />
<rect x="26" y="58.55" width="3.8" height="1.5" fill="#dcdcdc" />
<rect x="930.2" y="58.55" width="3.8" height="1.5" fill="#dcdcdc" />
<rect x="26" y="70.55" width="3.8" height="1.5" fill="#dcdcdc" />
<rect x="930.2" y="70.55" width="3.8" height="1.5" fill="#dcdcdc" />
<rect x="26" y="82.55" width="7.2" height="1.5" fill="#dcdcdc" />
<rect x="926.8" y="82.55" width="7.2" height="1.5" fill="#dcdcdc" />
<rect x="26" y="94.55" width="3.8" height="1.5" fill="#dcdcdc" />
<rect x="930.2" y="94.55" width="3.8" height="1.5" fill="#dcdcdc" />
<rect x="26" y="106.55" width="3.8" height="1.5" fill="#dcdcdc" />
<rect x="930.2" y="106.55" width="3.8" height="1.5" fill="#dcdcdc" />
<rect x="26" y="118.55" width="3.8" height="1.5" fill="#dcdcdc" />
<rect x="930.2" y="118.55" width="3.8" height="1.5" fill="#dcdcdc" />
<rect x="26" y="130.55" width="3.8" height="1.5" fill="#dcdcdc" />
<rect x="930.2" y="130.55" width="3.8" height="1.5" fill="#dcdcdc" />
<rect x="26" y="142.55" width="7.2" height="1.5" fill="#dcdcdc" />
<rect x="926.8" y="142.55" width="7.2" height="1.5" fill="#dcdcdc" />
<rect x="26" y="154.55" width="3.8" height="1.5" fill="#dcdcdc" />
<rect x="930.2" y="154.55" width="3.8" height="1.5" fill="#dcdcdc" />
<rect x="26" y="166.55" width="3.8" height="1.5" fill="#dcdcdc" />
<rect x="930.2" y="166.55" width="3.8" height="1.5" fill="#dcdcdc" />
<rect x="26" y="178.55" width="3.8" height="1.5" fill="#dcdcdc" />
<rect x="930.2" y="178.55" width="3.8" height="1.5" fill="#dcdcdc" />
<rect x="26" y="190.55" width="3.8" height="1.5" fill="#dcdcdc" />
<rect x="930.2" y="190.55" width="3.8" height="1.5" fill="#dcdcdc" />
<rect x="26" y="202.55" width="7.2" height="1.5" fill="#dcdcdc" />
<rect x="926.8" y="202.55" width="7.2" height="1.5" fill="#dcdcdc" />
<rect x="26" y="214.55" width="3.8" height="1.5" fill="#dcdcdc" />
<rect x="930.2" y="214.55" width="3.8" height="1.5" fill="#dcdcdc" />
<rect x="26" y="226.55" width="3.8" height="1.5" fill="#dcdcdc" />
<rect x="930.2" y="226.55" width="3.8" height="1.5" fill="#dcdcdc" />
<rect x="26" y="238.55" width="3.8" height="1.5" fill="#dcdcdc" />
<rect x="930.2" y="238.55" width="3.8" height="1.5" fill="#dcdcdc" />
<rect x="26" y="250.55" width="3.8" height="1.5" fill="#dcdcdc" />
<rect x="930.2" y="250.55" width="3.8" height="1.5" fill="#dcdcdc" />
<rect x="26" y="262.55" width="7.2" height="1.5" fill="#dcdcdc" />
<rect x="926.8" y="262.55" width="7.2" height="1.5" fill="#dcdcdc" />
<rect x="26" y="274.55" width="3.8" height="1.5" fill="#dcdcdc" />
<rect x="930.2" y="274.55" width="3.8" height="1.5" fill="#dcdcdc" />
<rect x="26" y="286.55" width="3.8" height="1.5" fill="#dcdcdc" />
<rect x="930.2" y="286.55" width="3.8" height="1.5" fill="#dcdcdc" />
<rect x="26" y="298.55" width="3.8" height="1.5" fill="#dcdcdc" />
<rect x="930.2" y="298.55" width="3.8" height="1.5" fill="#dcdcdc" />
<rect x="26" y="310.55" width="3.8" height="1.5" fill="#dcdcdc" />
<rect x="930.2" y="310.55" width="3.8" height="1.5" fill="#dcdcdc" />
<rect x="26" y="322.55" width="7.2" height="1.5" fill="#dcdcdc" />
<rect x="926.8" y="322.55" width="7.2" height="1.5" fill="#dcdcdc" />
<rect x="26" y="334.55" width="3.8" height="1.5" fill="#dcdcdc" />
<rect x="930.2" y="334.55" width="3.8" height="1.5" fill="#dcdcdc" />
<rect x="26" y="346.55" width="3.8" height="1.5" fill="#dcdcdc" />
<rect x="930.2" y="346.55" width="3.8" height="1.5" fill="#dcdcdc" />
<rect x="26" y="358.55" width="3.8" height="1.5" fill="#dcdcdc" />
<rect x="930.2" y="358.55" width="3.8" height="1.5" fill="#dcdcdc" />
<rect x="26" y="370.55" width="3.8" height="1.5" fill="#dcdcdc" />
<rect x="930.2" y="370.55" width="3.8" height="1.5" fill="#dcdcdc" />
<rect x="26" y="382.55" width="7.2" height="1.5" fill="#dcdcdc" />
<rect x="926.8" y="382.55" width="7.2" height="1.5" fill="#dcdcdc" />
<rect x="26" y="394.55" width="3.8" height="1.5" fill="#dcdcdc" />
<rect x="930.2" y="394.55" width="3.8" height="1.5" fill="#dcdcdc" />
<rect x="26" y="406.55" width="3.8" height="1.5" fill="#dcdcdc" />
<rect x="930.2" y="406.55" width="3.8" height="1.5" fill="#dcdcdc" />
<rect x="26" y="418.55" width="3.8" height="1.5" fill="#dcdcdc" />
<rect x="930.2" y="418.55" width="3.8" height="1.5" fill="#dcdcdc" />
<rect x="26" y="430.55" width="3.8" height="1.5" fill="#dcdcdc" />
<rect x="930.2" y="430.55" width="3.8" height="1.5" fill="#dcdcdc" />
<rect x="26" y="442.55" width="7.2" height="1.5" fill="#dcdcdc" />
<rect x="926.8" y="442.55" width="7.2" height="1.5" fill="#dcdcdc" />
<rect x="26" y="454.55" width="3.8" height="1.5" fill="#dcdcdc" />
<rect x="930.2" y="454.55" width="3.8" height="1.5" fill="#dcdcdc" />
<rect x="26" y="466.55" width="3.8" height="1.5" fill="#dcdcdc" />
<rect x="930.2" y="466.55" width="3.8" height="1.5" fill="#dcdcdc" />
<rect x="26" y="478.55" width="3.8" height="1.5" fill="#dcdcdc" />
<rect x="930.2" y="478.55" width="3.8" height="1.5" fill="#dcdcdc" />
<rect x="26" y="490.55" width="3.8" height="1.5" fill="#dcdcdc" />
<rect x="930.2" y="490.55" width="3.8" height="1.5" fill="#dcdcdc" />
<rect x="26" y="502.55" width="7.2" height="1.5" fill="#dcdcdc" />
<rect x="926.8" y="502.55" width="7.2" height="1.5" fill="#dcdcdc" />
<rect x="26" y="514.55" width="3.8" height="1.5" fill="#dcdcdc" />
<rect x="930.2" y="514.55" width="3.8" height="1.5" fill="#dcdcdc" />
<rect x="26" y="526.55" width="3.8" height="1.5" fill="#dcdcdc" />
<rect x="930.2" y="526.55" width="3.8" height="1.5" fill="#dcdcdc" />
<rect x="26" y="538.55" width="3.8" height="1.5" fill="#dcdcdc" />
<rect x="930.2" y="538.55" width="3.8" height="1.5" fill="#dcdcdc" />
<rect x="26" y="550.55" width="3.8" height="1.5" fill="#dcdcdc" />
<rect x="930.2" y="550.55" width="3.8" height="1.5" fill="#dcdcdc" />
<rect x="26" y="562.55" width="7.2" height="1.5" fill="#dcdcdc" />
<rect x="926.8" y="562.55" width="7.2" height="1.5" fill="#dcdcdc" />
<rect x="26" y="574.55" width="3.8" height="1.5" fill="#dcdcdc" />
<rect x="930.2" y="574.55" width="3.8" height="1.5" fill="#dcdcdc" />
<rect x="26" y="586.55" width="3.8" height="1.5" fill="#dcdcdc" />
<rect x="930.2" y="586.55" width="3.8" height="1.5" fill="#dcdcdc" />
<rect x="26" y="598.55" width="3.8" height="1.5" fill="#dcdcdc" />
<rect x="930.2" y="598.55" width="3.8" height="1.5" fill="#dcdcdc" />
<rect x="26" y="610.55" width="3.8" height="1.5" fill="#dcdcdc" />
<rect x="930.2" y="610.55" width="3.8" height="1.5" fill="#dcdcdc" />
<rect x="26" y="320" width="433" height="5.3" fill="#f0f010" />
<rect x="466" y="320" width="467" height="5.3" fill="#f0f010" />
<rect x="28.0" y="322.6" width="1.5" height="2.8" fill="#000" opacity="0.75"/>
<rect x="33.2" y="322.6" width="1.2" height="2.8" fill="#000" opacity="0.75"/>
<rect x="36.8" y="322.6" width="2.6" height="2.8" fill="#000" opacity="0.75"/>
<rect x="41.8" y="322.6" width="2.6" height="2.8" fill="#000" opacity="0.75"/>
<rect x="46.7" y="322.6" width="2.6" height="2.8" fill="#000" opacity="0.75"/>
<rect x="52.2" y="322.6" width="1.2" height="2.8" fill="#000" opacity="0.75"/>
<rect x="57.4" y="322.6" width="1.2" height="2.8" fill="#000" opacity="0.75"/>
<rect x="61.7" y="322.6" width="2.6" height="2.8" fill="#000" opacity="0.75"/>
<rect x="68.2" y="322.6" width="2.6" height="2.8" fill="#000" opacity="0.75"/>
<rect x="73.3" y="322.6" width="1.5" height="2.8" fill="#000" opacity="0.75"/>
<rect x="79.7" y="322.6" width="2.6" height="2.8" fill="#000" opacity="0.75"/>
<rect x="88.5" y="322.6" width="2.6" height="2.8" fill="#000" opacity="0.75"/>
<rect x="95.8" y="322.6" width="1.2" height="2.8" fill="#000" opacity="0.75"/>
<rect x="103.4" y="322.6" width="1.2" height="2.8" fill="#000" opacity="0.75"/>
<rect x="109.1" y="322.6" width="1.5" height="2.8" fill="#000" opacity="0.75"/>
<rect x="113.9" y="322.6" width="1.5" height="2.8" fill="#000" opacity="0.75"/>
<rect x="119.8" y="322.6" width="2.6" height="2.8" fill="#000" opacity="0.75"/>
<rect x="125.8" y="322.6" width="3.4" height="2.8" fill="#000" opacity="0.75"/>
<rect x="132.0" y="322.6" width="2.6" height="2.8" fill="#000" opacity="0.75"/>
<rect x="139.2" y="322.6" width="1.5" height="2.8" fill="#000" opacity="0.75"/>
<rect x="144.3" y="322.6" width="2.6" height="2.8" fill="#000" opacity="0.75"/>
<rect x="152.2" y="322.6" width="2.6" height="2.8" fill="#000" opacity="0.75"/>
<rect x="157.0" y="322.6" width="1.5" height="2.8" fill="#000" opacity="0.75"/>
<rect x="162.8" y="322.6" width="2.6" height="2.8" fill="#000" opacity="0.75"/>
<rect x="169.3" y="322.6" width="1.8" height="2.8" fill="#000" opacity="0.75"/>
<rect x="175.2" y="322.6" width="2.2" height="2.8" fill="#000" opacity="0.75"/>
<rect x="181.0" y="322.6" width="1.5" height="2.8" fill="#000" opacity="0.75"/>
<rect x="188.1" y="322.6" width="3.4" height="2.8" fill="#000" opacity="0.75"/>
<rect x="197.0" y="322.6" width="1.2" height="2.8" fill="#000" opacity="0.75"/>
<rect x="202.8" y="322.6" width="2.6" height="2.8" fill="#000" opacity="0.75"/>
<rect x="209.6" y="322.6" width="1.8" height="2.8" fill="#000" opacity="0.75"/>
<rect x="216.7" y="322.6" width="1.8" height="2.8" fill="#000" opacity="0.75"/>
<rect x="223.2" y="322.6" width="1.2" height="2.8" fill="#000" opacity="0.75"/>
<rect x="227.0" y="322.6" width="2.2" height="2.8" fill="#000" opacity="0.75"/>
<rect x="231.9" y="322.6" width="1.8" height="2.8" fill="#000" opacity="0.75"/>
<rect x="236.4" y="322.6" width="2.2" height="2.8" fill="#000" opacity="0.75"/>
<rect x="242.5" y="322.6" width="3.4" height="2.8" fill="#000" opacity="0.75"/>
<rect x="248.2" y="322.6" width="2.6" height="2.8" fill="#000" opacity="0.75"/>
<rect x="255.4" y="322.6" width="1.8" height="2.8" fill="#000" opacity="0.75"/>
<rect x="260.7" y="322.6" width="1.8" height="2.8" fill="#000" opacity="0.75"/>
<rect x="267.2" y="322.6" width="2.6" height="2.8" fill="#000" opacity="0.75"/>
<rect x="275.4" y="322.6" width="1.2" height="2.8" fill="#000" opacity="0.75"/>
<rect x="282.4" y="322.6" width="1.8" height="2.8" fill="#000" opacity="0.75"/>
<rect x="288.3" y="322.6" width="3.4" height="2.8" fill="#000" opacity="0.75"/>
<rect x="294.0" y="322.6" width="3.4" height="2.8" fill="#000" opacity="0.75"/>
<rect x="302.6" y="322.6" width="3.4" height="2.8" fill="#000" opacity="0.75"/>
<rect x="310.6" y="322.6" width="3.4" height="2.8" fill="#000" opacity="0.75"/>
<rect x="319.7" y="322.6" width="1.8" height="2.8" fill="#000" opacity="0.75"/>
<rect x="326.7" y="322.6" width="3.4" height="2.8" fill="#000" opacity="0.75"/>
<rect x="333.6" y="322.6" width="2.2" height="2.8" fill="#000" opacity="0.75"/>
<rect x="339.4" y="322.6" width="2.6" height="2.8" fill="#000" opacity="0.75"/>
<rect x="344.6" y="322.6" width="1.2" height="2.8" fill="#000" opacity="0.75"/>
<rect x="348.8" y="322.6" width="1.8" height="2.8" fill="#000" opacity="0.75"/>
<rect x="353.1" y="322.6" width="1.5" height="2.8" fill="#000" opacity="0.75"/>
<rect x="358.4" y="322.6" width="2.2" height="2.8" fill="#000" opacity="0.75"/>
<rect x="363.0" y="322.6" width="2.2" height="2.8" fill="#000" opacity="0.75"/>
<rect x="369.0" y="322.6" width="1.8" height="2.8" fill="#000" opacity="0.75"/>
<rect x="376.8" y="322.6" width="2.2" height="2.8" fill="#000" opacity="0.75"/>
<rect x="384.9" y="322.6" width="1.8" height="2.8" fill="#000" opacity="0.75"/>
<rect x="391.8" y="322.6" width="1.8" height="2.8" fill="#000" opacity="0.75"/>
<rect x="398.7" y="322.6" width="2.2" height="2.8" fill="#000" opacity="0.75"/>
<rect x="407.2" y="322.6" width="1.5" height="2.8" fill="#000" opacity="0.75"/>
<rect x="411.1" y="322.6" width="1.5" height="2.8" fill="#000" opacity="0.75"/>
<rect x="415.6" y="322.6" width="1.5" height="2.8" fill="#000" opacity="0.75"/>
<rect x="419.2" y="322.6" width="2.6" height="2.8" fill="#000" opacity="0.75"/>
<rect x="424.6" y="322.6" width="1.8" height="2.8" fill="#000" opacity="0.75"/>
<rect x="428.4" y="322.6" width="2.2" height="2.8" fill="#000" opacity="0.75"/>
<rect x="435.0" y="322.6" width="2.6" height="2.8" fill="#000" opacity="0.75"/>
<rect x="442.2" y="322.6" width="1.5" height="2.8" fill="#000" opacity="0.75"/>
<rect x="448.8" y="322.6" width="2.6" height="2.8" fill="#000" opacity="0.75"/>
<rect x="469.0" y="322.6" width="3.4" height="2.8" fill="#000" opacity="0.75"/>
<rect x="474.6" y="322.6" width="3.4" height="2.8" fill="#000" opacity="0.75"/>
<rect x="483.6" y="322.6" width="2.2" height="2.8" fill="#000" opacity="0.75"/>
<rect x="489.6" y="322.6" width="2.2" height="2.8" fill="#000" opacity="0.75"/>
<rect x="494.3" y="322.6" width="3.4" height="2.8" fill="#000" opacity="0.75"/>
<rect x="501.5" y="322.6" width="1.5" height="2.8" fill="#000" opacity="0.75"/>
<rect x="505.3" y="322.6" width="1.5" height="2.8" fill="#000" opacity="0.75"/>
<rect x="510.7" y="322.6" width="1.2" height="2.8" fill="#000" opacity="0.75"/>
<rect x="515.5" y="322.6" width="1.2" height="2.8" fill="#000" opacity="0.75"/>
<rect x="519.1" y="322.6" width="2.6" height="2.8" fill="#000" opacity="0.75"/>
<rect x="524.4" y="322.6" width="1.2" height="2.8" fill="#000" opacity="0.75"/>
<rect x="531.9" y="322.6" width="2.6" height="2.8" fill="#000" opacity="0.75"/>
<rect x="536.6" y="322.6" width="1.5" height="2.8" fill="#000" opacity="0.75"/>
<rect x="542.9" y="322.6" width="1.5" height="2.8" fill="#000" opacity="0.75"/>
<rect x="549.2" y="322.6" width="1.8" height="2.8" fill="#000" opacity="0.75"/>
<rect x="555.7" y="322.6" width="2.2" height="2.8" fill="#000" opacity="0.75"/>
<rect x="560.5" y="322.6" width="2.2" height="2.8" fill="#000" opacity="0.75"/>
<rect x="569.2" y="322.6" width="2.2" height="2.8" fill="#000" opacity="0.75"/>
<rect x="575.5" y="322.6" width="1.8" height="2.8" fill="#000" opacity="0.75"/>
<rect x="579.7" y="322.6" width="1.2" height="2.8" fill="#000" opacity="0.75"/>
<rect x="586.3" y="322.6" width="3.4" height="2.8" fill="#000" opacity="0.75"/>
<rect x="592.9" y="322.6" width="3.4" height="2.8" fill="#000" opacity="0.75"/>
<rect x="599.0" y="322.6" width="1.2" height="2.8" fill="#000" opacity="0.75"/>
<rect x="603.1" y="322.6" width="2.6" height="2.8" fill="#000" opacity="0.75"/>
<rect x="609.3" y="322.6" width="3.4" height="2.8" fill="#000" opacity="0.75"/>
<rect x="617.2" y="322.6" width="1.2" height="2.8" fill="#000" opacity="0.75"/>
<rect x="623.8" y="322.6" width="1.8" height="2.8" fill="#000" opacity="0.75"/>
<rect x="632.0" y="322.6" width="1.2" height="2.8" fill="#000" opacity="0.75"/>
<rect x="638.3" y="322.6" width="1.8" height="2.8" fill="#000" opacity="0.75"/>
<rect x="644.5" y="322.6" width="1.5" height="2.8" fill="#000" opacity="0.75"/>
<rect x="649.6" y="322.6" width="1.5" height="2.8" fill="#000" opacity="0.75"/>
<rect x="655.5" y="322.6" width="2.6" height="2.8" fill="#000" opacity="0.75"/>
<rect x="661.5" y="322.6" width="1.5" height="2.8" fill="#000" opacity="0.75"/>
<rect x="667.8" y="322.6" width="1.5" height="2.8" fill="#000" opacity="0.75"/>
<rect x="674.9" y="322.6" width="2.2" height="2.8" fill="#000" opacity="0.75"/>
<rect x="682.5" y="322.6" width="1.5" height="2.8" fill="#000" opacity="0.75"/>
<rect x="686.9" y="322.6" width="2.2" height="2.8" fill="#000" opacity="0.75"/>
<rect x="692.7" y="322.6" width="1.2" height="2.8" fill="#000" opacity="0.75"/>
<rect x="700.3" y="322.6" width="1.8" height="2.8" fill="#000" opacity="0.75"/>
<rect x="706.2" y="322.6" width="1.5" height="2.8" fill="#000" opacity="0.75"/>
<rect x="712.9" y="322.6" width="1.8" height="2.8" fill="#000" opacity="0.75"/>
<rect x="718.7" y="322.6" width="3.4" height="2.8" fill="#000" opacity="0.75"/>
<rect x="728.5" y="322.6" width="1.8" height="2.8" fill="#000" opacity="0.75"/>
<rect x="732.7" y="322.6" width="1.2" height="2.8" fill="#000" opacity="0.75"/>
<rect x="736.9" y="322.6" width="1.5" height="2.8" fill="#000" opacity="0.75"/>
<rect x="741.9" y="322.6" width="2.2" height="2.8" fill="#000" opacity="0.75"/>
<rect x="748.9" y="322.6" width="2.6" height="2.8" fill="#000" opacity="0.75"/>
<rect x="757.3" y="322.6" width="2.2" height="2.8" fill="#000" opacity="0.75"/>
<rect x="765.6" y="322.6" width="1.8" height="2.8" fill="#000" opacity="0.75"/>
<rect x="773.0" y="322.6" width="1.2" height="2.8" fill="#000" opacity="0.75"/>
<rect x="780.0" y="322.6" width="1.2" height="2.8" fill="#000" opacity="0.75"/>
<rect x="787.2" y="322.6" width="3.4" height="2.8" fill="#000" opacity="0.75"/>
<rect x="796.0" y="322.6" width="2.2" height="2.8" fill="#000" opacity="0.75"/>
<rect x="804.2" y="322.6" width="2.2" height="2.8" fill="#000" opacity="0.75"/>
<rect x="812.0" y="322.6" width="1.8" height="2.8" fill="#000" opacity="0.75"/>
<rect x="816.2" y="322.6" width="3.4" height="2.8" fill="#000" opacity="0.75"/>
<rect x="823.3" y="322.6" width="2.2" height="2.8" fill="#000" opacity="0.75"/>
<rect x="830.9" y="322.6" width="1.2" height="2.8" fill="#000" opacity="0.75"/>
<rect x="837.4" y="322.6" width="1.5" height="2.8" fill="#000" opacity="0.75"/>
<rect x="845.3" y="322.6" width="1.2" height="2.8" fill="#000" opacity="0.75"/>
<rect x="849.2" y="322.6" width="2.2" height="2.8" fill="#000" opacity="0.75"/>
<rect x="857.0" y="322.6" width="1.5" height="2.8" fill="#000" opacity="0.75"/>
<rect x="863.3" y="322.6" width="2.6" height="2.8" fill="#000" opacity="0.75"/>
<rect x="872.3" y="322.6" width="3.4" height="2.8" fill="#000" opacity="0.75"/>
<rect x="881.9" y="322.6" width="1.5" height="2.8" fill="#000" opacity="0.75"/>
<rect x="887.9" y="322.6" width="1.5" height="2.8" fill="#000" opacity="0.75"/>
<rect x="891.5" y="322.6" width="3.4" height="2.8" fill="#000" opacity="0.75"/>
<rect x="899.8" y="322.6" width="2.6" height="2.8" fill="#000" opacity="0.75"/>
<rect x="907.8" y="322.6" width="1.5" height="2.8" fill="#000" opacity="0.75"/>
<rect x="913.2" y="322.6" width="1.5" height="2.8" fill="#000" opacity="0.75"/>
<rect x="920.4" y="322.6" width="1.5" height="2.8" fill="#000" opacity="0.75"/>
<rect x="924.1" y="322.6" width="1.5" height="2.8" fill="#000" opacity="0.75"/>
<rect x="928.9" y="322.6" width="1.5" height="2.8" fill="#000" opacity="0.75"/>
<path d="M31.65 320.5 L31.65 316 Q32.50 314.8 33.35 316 L33.35 320.5 Z" fill="#f0f010"/>
<path d="M41.77 320.5 L41.77 316 Q42.62 314.8 43.48 316 L43.48 320.5 Z" fill="#f0f010"/>
<path d="M51.90 320.5 L51.90 316.3 Q52.75 315.1 53.60 316.3 L53.60 320.5 Z" fill="#f0f010"/>
<path d="M62.02 320.5 L62.02 316.3 Q62.88 315.1 63.73 316.3 L63.73 320.5 Z" fill="#f0f010"/>
<path d="M72.15 320.5 L72.15 316 Q73.00 314.8 73.85 316 L73.85 320.5 Z" fill="#f0f010"/>
<path d="M82.28 320.5 L82.28 315.5 Q83.12 314.3 83.97 315.5 L83.97 320.5 Z" fill="#f0f010"/>
<path d="M92.40 320.5 L92.40 316 Q93.25 314.8 94.10 316 L94.10 320.5 Z" fill="#f0f010"/>
<path d="M102.53 320.5 L102.53 316.3 Q103.38 315.1 104.22 316.3 L104.22 320.5 Z" fill="#f0f010"/>
<path d="M112.65 320.5 L112.65 316.3 Q113.50 315.1 114.35 316.3 L114.35 320.5 Z" fill="#f0f010"/>
<path d="M122.78 320.5 L122.78 316.3 Q123.62 315.1 124.47 316.3 L124.47 320.5 Z" fill="#f0f010"/>
<path d="M132.90 320.5 L132.90 316.3 Q133.75 315.1 134.60 316.3 L134.60 320.5 Z" fill="#f0f010"/>
<path d="M143.03 320.5 L143.03 316.3 Q143.88 315.1 144.72 316.3 L144.72 320.5 Z" fill="#f0f010"/>
<path d="M153.15 320.5 L153.15 316 Q154.00 314.8 154.85 316 L154.85 320.5 Z" fill="#f0f010"/>
<path d="M163.28 320.5 L163.28 316.3 Q164.12 315.1 164.97 316.3 L164.97 320.5 Z" fill="#f0f010"/>
<path d="M173.40 320.5 L173.40 316 Q174.25 314.8 175.10 316 L175.10 320.5 Z" fill="#f0f010"/>
<path d="M183.53 320.5 L183.53 316.3 Q184.38 315.1 185.22 316.3 L185.22 320.5 Z" fill="#f0f010"/>
<path d="M193.65 320.5 L193.65 316.3 Q194.50 315.1 195.35 316.3 L195.35 320.5 Z" fill="#f0f010"/>
<path d="M203.78 320.5 L203.78 315.5 Q204.62 314.3 205.47 315.5 L205.47 320.5 Z" fill="#f0f010"/>
<path d="M213.90 320.5 L213.90 316.3 Q214.75 315.1 215.60 316.3 L215.60 320.5 Z" fill="#f0f010"/>
<path d="M224.03 320.5 L224.03 316 Q224.88 314.8 225.72 316 L225.72 320.5 Z" fill="#f0f010"/>
<path d="M234.15 320.5 L234.15 316.3 Q235.00 315.1 235.85 316.3 L235.85 320.5 Z" fill="#f0f010"/>
<path d="M244.28 320.5 L244.28 315.5 Q245.12 314.3 245.97 315.5 L245.97 320.5 Z" fill="#f0f010"/>
<path d="M254.40 320.5 L254.40 316 Q255.25 314.8 256.10 316 L256.10 320.5 Z" fill="#f0f010"/>
<path d="M264.52 320.5 L264.52 316 Q265.38 314.8 266.23 316 L266.23 320.5 Z" fill="#f0f010"/>
<path d="M274.65 320.5 L274.65 316 Q275.50 314.8 276.35 316 L276.35 320.5 Z" fill="#f0f010"/>
<path d="M284.77 320.5 L284.77 316.3 Q285.62 315.1 286.48 316.3 L286.48 320.5 Z" fill="#f0f010"/>
<path d="M294.90 320.5 L294.90 316.3 Q295.75 315.1 296.60 316.3 L296.60 320.5 Z" fill="#f0f010"/>
<path d="M305.02 320.5 L305.02 315.5 Q305.88 314.3 306.73 315.5 L306.73 320.5 Z" fill="#f0f010"/>
<path d="M315.15 320.5 L315.15 316.3 Q316.00 315.1 316.85 316.3 L316.85 320.5 Z" fill="#f0f010"/>
<path d="M325.27 320.5 L325.27 315.5 Q326.12 314.3 326.98 315.5 L326.98 320.5 Z" fill="#f0f010"/>
<path d="M335.40 320.5 L335.40 316 Q336.25 314.8 337.10 316 L337.10 320.5 Z" fill="#f0f010"/>
<path d="M345.52 320.5 L345.52 316.3 Q346.38 315.1 347.23 316.3 L347.23 320.5 Z" fill="#f0f010"/>
<path d="M355.65 320.5 L355.65 316.3 Q356.50 315.1 357.35 316.3 L357.35 320.5 Z" fill="#f0f010"/>
<path d="M365.77 320.5 L365.77 316.3 Q366.62 315.1 367.48 316.3 L367.48 320.5 Z" fill="#f0f010"/>
<path d="M375.90 320.5 L375.90 316.3 Q376.75 315.1 377.60 316.3 L377.60 320.5 Z" fill="#f0f010"/>
<path d="M386.02 320.5 L386.02 315.5 Q386.88 314.3 387.73 315.5 L387.73 320.5 Z" fill="#f0f010"/>
<path d="M396.15 320.5 L396.15 316.3 Q397.00 315.1 397.85 316.3 L397.85 320.5 Z" fill="#f0f010"/>
<path d="M406.27 320.5 L406.27 315.5 Q407.12 314.3 407.98 315.5 L407.98 320.5 Z" fill="#f0f010"/>
<path d="M416.40 320.5 L416.40 316 Q417.25 314.8 418.10 316 L418.10 320.5 Z" fill="#f0f010"/>
<path d="M426.52 320.5 L426.52 316 Q427.38 314.8 428.23 316 L428.23 320.5 Z" fill="#f0f010"/>
<path d="M436.65 320.5 L436.65 316 Q437.50 314.8 438.35 316 L438.35 320.5 Z" fill="#f0f010"/>
<path d="M446.77 320.5 L446.77 315.5 Q447.62 314.3 448.48 315.5 L448.48 320.5 Z" fill="#f0f010"/>
<path d="M475.40 320.5 L475.40 315.5 Q476.25 314.3 477.10 315.5 L477.10 320.5 Z" fill="#f0f010"/>
<path d="M485.51 320.5 L485.51 316.3 Q486.36 315.1 487.21 316.3 L487.21 320.5 Z" fill="#f0f010"/>
<path d="M495.62 320.5 L495.62 316.3 Q496.47 315.1 497.32 316.3 L497.32 320.5 Z" fill="#f0f010"/>
<path d="M505.73 320.5 L505.73 316.3 Q506.58 315.1 507.43 316.3 L507.43 320.5 Z" fill="#f0f010"/>
<path d="M515.84 320.5 L515.84 315.5 Q516.69 314.3 517.54 315.5 L517.54 320.5 Z" fill="#f0f010"/>
<path d="M525.95 320.5 L525.95 315.5 Q526.80 314.3 527.65 315.5 L527.65 320.5 Z" fill="#f0f010"/>
<path d="M536.06 320.5 L536.06 316.3 Q536.91 315.1 537.76 316.3 L537.76 320.5 Z" fill="#f0f010"/>
<path d="M546.17 320.5 L546.17 316 Q547.02 314.8 547.87 316 L547.87 320.5 Z" fill="#f0f010"/>
<path d="M556.28 320.5 L556.28 316.3 Q557.13 315.1 557.98 316.3 L557.98 320.5 Z" fill="#f0f010"/>
<path d="M566.39 320.5 L566.39 316.3 Q567.24 315.1 568.09 316.3 L568.09 320.5 Z" fill="#f0f010"/>
<path d="M576.50 320.5 L576.50 316.3 Q577.35 315.1 578.20 316.3 L578.20 320.5 Z" fill="#f0f010"/>
<path d="M586.61 320.5 L586.61 316.3 Q587.46 315.1 588.31 316.3 L588.31 320.5 Z" fill="#f0f010"/>
<path d="M596.72 320.5 L596.72 316 Q597.57 314.8 598.42 316 L598.42 320.5 Z" fill="#f0f010"/>
<path d="M606.83 320.5 L606.83 316 Q607.68 314.8 608.53 316 L608.53 320.5 Z" fill="#f0f010"/>
<path d="M616.94 320.5 L616.94 316.3 Q617.79 315.1 618.64 316.3 L618.64 320.5 Z" fill="#f0f010"/>
<path d="M627.05 320.5 L627.05 316.3 Q627.90 315.1 628.75 316.3 L628.75 320.5 Z" fill="#f0f010"/>
<path d="M637.16 320.5 L637.16 316.3 Q638.01 315.1 638.86 316.3 L638.86 320.5 Z" fill="#f0f010"/>
<path d="M647.27 320.5 L647.27 316.3 Q648.12 315.1 648.97 316.3 L648.97 320.5 Z" fill="#f0f010"/>
<path d="M657.38 320.5 L657.38 316.3 Q658.23 315.1 659.08 316.3 L659.08 320.5 Z" fill="#f0f010"/>
<path d="M667.49 320.5 L667.49 316 Q668.34 314.8 669.19 316 L669.19 320.5 Z" fill="#f0f010"/>
<path d="M677.60 320.5 L677.60 316.3 Q678.45 315.1 679.30 316.3 L679.30 320.5 Z" fill="#f0f010"/>
<path d="M687.71 320.5 L687.71 316 Q688.56 314.8 689.41 316 L689.41 320.5 Z" fill="#f0f010"/>
<path d="M697.82 320.5 L697.82 316.3 Q698.67 315.1 699.52 316.3 L699.52 320.5 Z" fill="#f0f010"/>
<path d="M707.93 320.5 L707.93 316 Q708.78 314.8 709.63 316 L709.63 320.5 Z" fill="#f0f010"/>
<path d="M718.04 320.5 L718.04 316.3 Q718.89 315.1 719.74 316.3 L719.74 320.5 Z" fill="#f0f010"/>
<path d="M728.15 320.5 L728.15 316 Q729.00 314.8 729.85 316 L729.85 320.5 Z" fill="#f0f010"/>
<path d="M738.26 320.5 L738.26 316.3 Q739.11 315.1 739.96 316.3 L739.96 320.5 Z" fill="#f0f010"/>
<path d="M748.37 320.5 L748.37 315.5 Q749.22 314.3 750.07 315.5 L750.07 320.5 Z" fill="#f0f010"/>
<path d="M758.48 320.5 L758.48 316.3 Q759.33 315.1 760.18 316.3 L760.18 320.5 Z" fill="#f0f010"/>
<path d="M768.59 320.5 L768.59 316.3 Q769.44 315.1 770.29 316.3 L770.29 320.5 Z" fill="#f0f010"/>
<path d="M778.70 320.5 L778.70 316 Q779.55 314.8 780.40 316 L780.40 320.5 Z" fill="#f0f010"/>
<path d="M788.81 320.5 L788.81 315.5 Q789.66 314.3 790.51 315.5 L790.51 320.5 Z" fill="#f0f010"/>
<path d="M798.92 320.5 L798.92 316 Q799.77 314.8 800.62 316 L800.62 320.5 Z" fill="#f0f010"/>
<path d="M809.03 320.5 L809.03 316.3 Q809.88 315.1 810.73 316.3 L810.73 320.5 Z" fill="#f0f010"/>
<path d="M819.14 320.5 L819.14 315.5 Q819.99 314.3 820.84 315.5 L820.84 320.5 Z" fill="#f0f010"/>
<path d="M829.25 320.5 L829.25 316 Q830.10 314.8 830.95 316 L830.95 320.5 Z" fill="#f0f010"/>
<path d="M839.36 320.5 L839.36 316 Q840.21 314.8 841.06 316 L841.06 320.5 Z" fill="#f0f010"/>
<path d="M849.47 320.5 L849.47 315.5 Q850.32 314.3 851.17 315.5 L851.17 320.5 Z" fill="#f0f010"/>
<path d="M859.58 320.5 L859.58 316 Q860.43 314.8 861.28 316 L861.28 320.5 Z" fill="#f0f010"/>
<path d="M869.69 320.5 L869.69 316 Q870.54 314.8 871.39 316 L871.39 320.5 Z" fill="#f0f010"/>
<path d="M879.80 320.5 L879.80 316 Q880.65 314.8 881.50 316 L881.50 320.5 Z" fill="#f0f010"/>
<path d="M889.91 320.5 L889.91 316 Q890.76 314.8 891.61 316 L891.61 320.5 Z" fill="#f0f010"/>
<path d="M900.02 320.5 L900.02 316 Q900.87 314.8 901.72 316 L901.72 320.5 Z" fill="#f0f010"/>
<path d="M910.13 320.5 L910.13 316.3 Q910.98 315.1 911.83 316.3 L911.83 320.5 Z" fill="#f0f010"/>
<path d="M920.24 320.5 L920.24 316 Q921.09 314.8 921.94 316 L921.94 320.5 Z" fill="#f0f010"/>
<path d="M930.35 320.5 L930.35 315.5 Q931.20 314.3 932.05 315.5 L932.05 320.5 Z" fill="#f0f010"/>
<rect x="457" y="315" width="2" height="305" fill="#b8b840" />
<rect x="465" y="310.5" width="2" height="309.5" fill="#b8b840" />
<rect x="457" y="618" width="10" height="2.3" fill="#d8d820" />
<path d="M0.8 311.5 L16.8 311.5 L22.8 321.5 L16.8 331.5 L0.8 331.5 Z" fill="#000" stroke="#e8e820" stroke-width="1.4"/>
<text x="9.8" y="327.8" fill="#f0f020" font-family='"Liberation Sans", sans-serif' font-size="18" stroke="#f0f020" stroke-width="0.5" text-anchor="middle">2</text>
<rect x="0" y="623" width="383" height="97" fill="#56acd0" />
<rect x="1.8" y="623.4" width="249" height="23" rx="3.5" fill="#000"/>
<rect x="1.8" y="647.6" width="249" height="22.9" rx="3.5" fill="#000"/>
<rect x="5" y="646.3" width="242" height="1.4" fill="#1c4864" />
<circle cx="12.3" cy="636" r="9.6" fill="#ee1010"/>
<path d="M13.3 630.6 L13.3 642.6 M9.2 634.2 L13.1 630.9" stroke="#280000" stroke-width="2.3" fill="none"/>
<text x="21.00" y="643.5" fill="#d42020" font-family='"Liberation Mono", monospace' font-size="18.22" letter-spacing="0.768" font-weight="normal" style="white-space:pre" stroke="#000" stroke-width="0.35" >5V-</text>
<text x="126.30" y="643.5" fill="#d42020" font-family='"Liberation Mono", monospace' font-size="18.22" letter-spacing="0.768" font-weight="normal" style="white-space:pre" stroke="#000" stroke-width="0.35" >0.00div</text>
<circle cx="12.5" cy="660" r="9.7" fill="#e8e820"/>
<text x="12.5" y="666.00" fill="#101000" font-family='"Liberation Sans", sans-serif' font-size="17.14" font-weight="bold" text-anchor="middle">2</text>
<text x="21.00" y="667" fill="#e6e63a" font-family='"Liberation Mono", monospace' font-size="18.22" letter-spacing="0.768" font-weight="normal" style="white-space:pre" stroke="#000" stroke-width="0.35" >20.0mV-  0.04div</text>
<rect x="253.6" y="623.4" width="126.6" height="47" rx="4" fill="#000"/>
<text x="263.28" y="640.3" fill="#e4e4e4" font-family='"Liberation Mono", monospace' font-size="18.22" letter-spacing="0.768" font-weight="normal" style="white-space:pre" stroke="#000" stroke-width="0.4" >(2.5KS/s)</text>
<text x="263.28" y="665" fill="#e4e4e4" font-family='"Liberation Mono", monospace' font-size="18.22" letter-spacing="0.768" font-weight="normal" style="white-space:pre" stroke="#000" stroke-width="0.4" >Depth:10K</text>
<rect x="1.4" y="672.6" width="379" height="44.4" rx="3.5" fill="#000"/>
<circle cx="11.5" cy="684" r="9.5" fill="#e8e820"/>
<text x="11.5" y="690.00" fill="#101000" font-family='"Liberation Sans", sans-serif' font-size="17.14" font-weight="bold" text-anchor="middle">2</text>
<circle cx="11.5" cy="706.9" r="9.5" fill="#e8e820"/>
<text x="11.5" y="712.90" fill="#101000" font-family='"Liberation Sans", sans-serif' font-size="17.14" font-weight="bold" text-anchor="middle">2</text>
<circle cx="202.4" cy="684.4" r="9.7" fill="#e8e820"/>
<text x="202.4" y="690.40" fill="#101000" font-family='"Liberation Sans", sans-serif' font-size="17.14" font-weight="bold" text-anchor="middle">2</text>
<circle cx="202.4" cy="706.5" r="9.7" fill="#e8e820"/>
<text x="202.4" y="712.50" fill="#101000" font-family='"Liberation Sans", sans-serif' font-size="17.14" font-weight="bold" text-anchor="middle">2</text>
<text x="24.91" y="690.3" fill="#e6e63a" font-family='"Liberation Mono", monospace' font-size="18.98" letter-spacing="0.812" font-weight="normal" style="white-space:pre" stroke="#000" stroke-width="0.35" >F:  ?   </text>
<text x="24.91" y="712.7" fill="#e6e63a" font-family='"Liberation Mono", monospace' font-size="18.98" letter-spacing="0.812" font-weight="normal" style="white-space:pre" stroke="#000" stroke-width="0.35" >+D:12.5%</text>
<text x="214.96" y="690.5" fill="#e6e63a" font-family='"Liberation Mono", monospace' font-size="18.98" letter-spacing="0.812" font-weight="normal" style="white-space:pre" stroke="#000" stroke-width="0.35" >Vk:9.743mv?</text>
<text x="214.96" y="712.7" fill="#e6e63a" font-family='"Liberation Mono", monospace' font-size="18.98" letter-spacing="0.812" font-weight="normal" style="white-space:pre" stroke="#000" stroke-width="0.35" >V:-0.998mv?</text>
<rect x="383" y="645.5" width="575" height="72.3" fill="#0462a2" />
<rect x="386" y="645" width="110" height="3" fill="#0884e4" />
<rect x="383" y="645.5" width="3" height="72.3" fill="#0a6cc4" />
<rect x="383.3" y="623.5" width="118.9" height="22" rx="7.5" ry="11" fill="#000"/>
<text x="400.13" y="640.8" fill="#e4e4e4" font-family='"Liberation Mono", monospace' font-size="18.22" letter-spacing="0.768" font-weight="normal" style="white-space:pre" stroke="#000" stroke-width="0.4" >M:200ms</text>
<rect x="797.8" y="624" width="154.4" height="21" rx="7.5" ry="10.5" fill="#000"/>
<circle cx="811" cy="635.3" r="9.3" fill="#e8e820"/>
<text x="811" y="641.05" fill="#101000" font-family='"Liberation Sans", sans-serif' font-size="16.43" font-weight="bold" text-anchor="middle">2</text>
<path d="M823 642.5 L832 642.5 L837.5 627 L845 627" fill="none" stroke="#e0e0e0" stroke-width="1.6"/>
<text x="848.68" y="642" fill="#e4e4e4" font-family='"Liberation Mono", monospace' font-size="18.22" letter-spacing="0.768" font-weight="normal" style="white-space:pre" stroke="#000" stroke-width="0.4" >0.00mV</text>
<rect x="385.8" y="647.6" width="109.40" height="69.10" rx="3" fill="#0a4c9c"/>
<rect x="387.20" y="648.80" width="106.50" height="65.50" rx="2.5" fill="#0882e2"/>
<path d="M388.20 713.20 L388.20 652.10 Q388.20 649.90 390.40 649.90 L492.20 649.90" fill="none" stroke="#52a8f4" stroke-width="2"/>
<rect x="715.2" y="648.2" width="109.10" height="68.50" rx="3" fill="#0a4c9c"/>
<rect x="716.60" y="649.40" width="106.20" height="64.90" rx="2.5" fill="#0882e2"/>
<path d="M717.60 713.20 L717.60 652.70 Q717.60 650.50 719.80 650.50 L821.30 650.50" fill="none" stroke="#52a8f4" stroke-width="2"/>
<text x="415.33" y="674.2" fill="#0a1a4a" font-family='"Liberation Mono", monospace' font-size="18.22" letter-spacing="0.768" font-weight="normal" style="white-space:pre" stroke="#0a1a4a" stroke-width="0.25" >Type</text>
<rect x="409" y="685" width="60" height="23.8" fill="#e4e4e4" />
<text x="410.48" y="703.3" fill="#101010" font-family='"Liberation Mono", monospace' font-size="18.22" letter-spacing="0.768" font-weight="normal" style="white-space:pre" stroke="#e4e4e4" stroke-width="0.3" >Image</text>
<text x="745" y="688.8" fill="#0a1a4a" font-family='"Liberation Sans", sans-serif' font-size="17.5" letter-spacing="2.3" stroke="#0a1a4a" stroke-width="0.35">Save</text>
</svg>
</body></html>
